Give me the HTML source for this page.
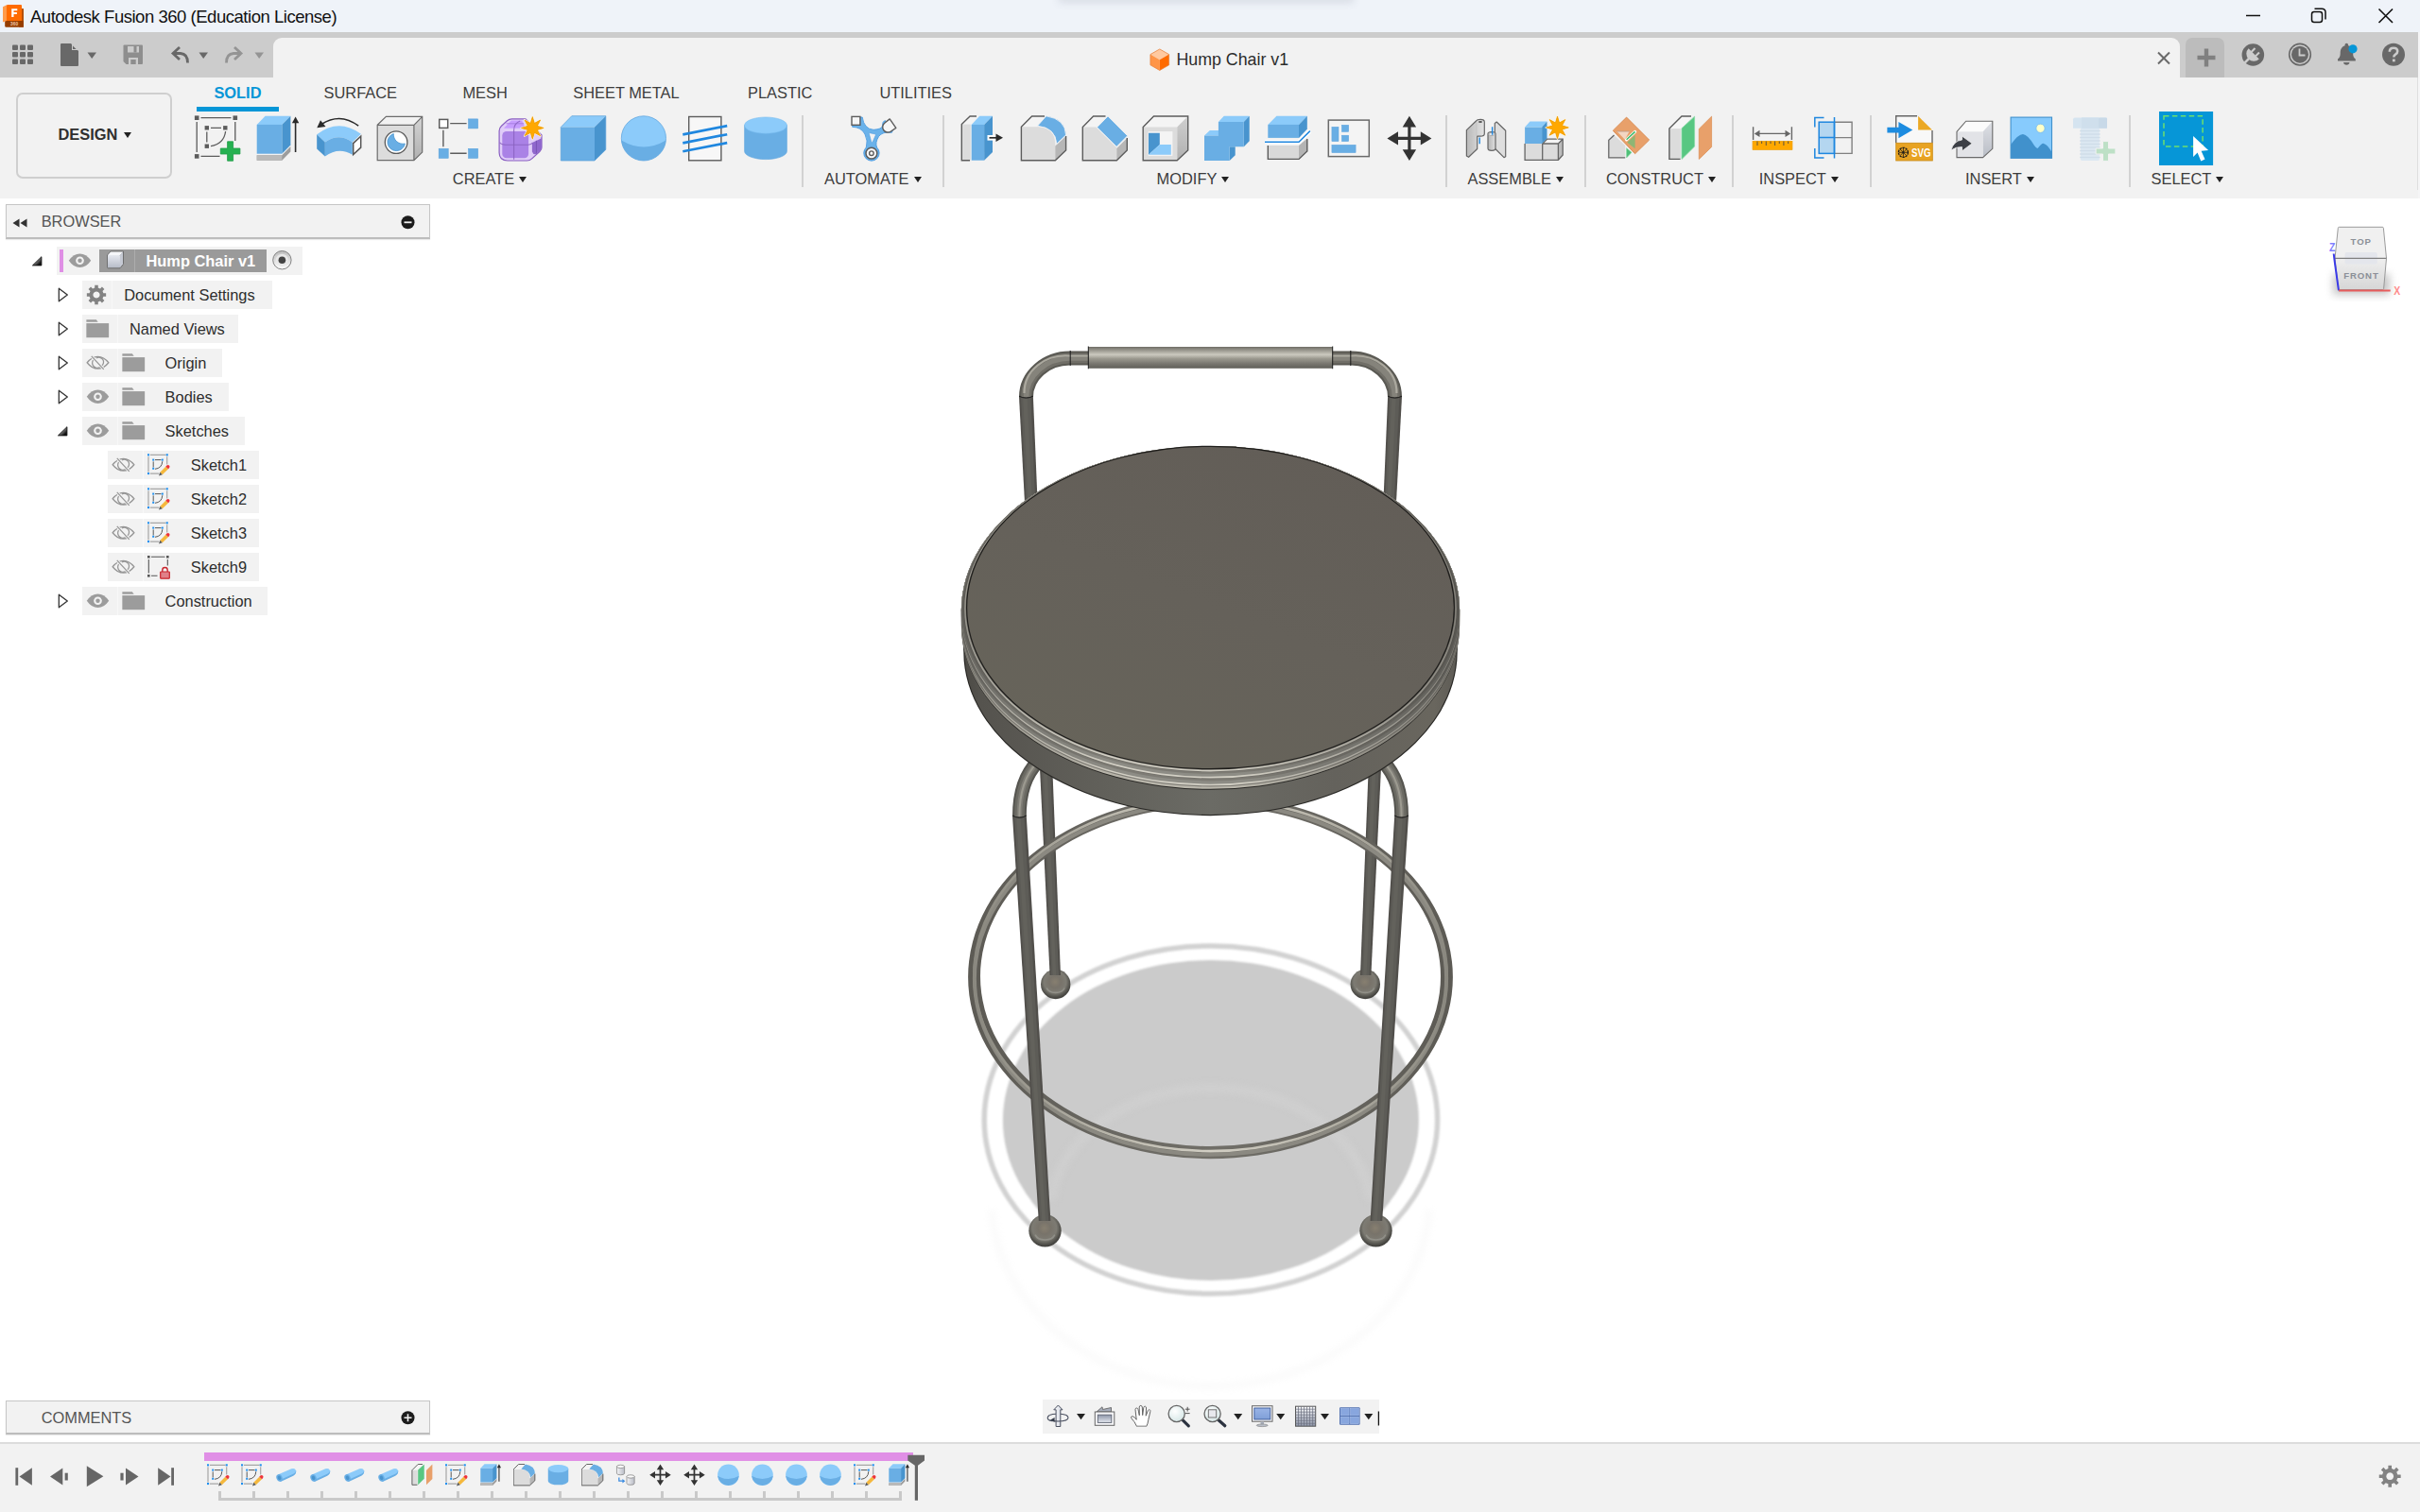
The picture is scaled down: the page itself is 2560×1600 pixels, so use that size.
<!DOCTYPE html>
<html><head><meta charset="utf-8"><title>Autodesk Fusion 360</title>
<style>
*{box-sizing:border-box;margin:0;padding:0}
html,body{width:2560px;height:1600px;overflow:hidden;background:#fff;font-family:"Liberation Sans",sans-serif;color:#333}
.abs{position:absolute}
#titlebar{position:absolute;left:0;top:0;width:2560px;height:34px;background:#eff3f9;overflow:hidden}
#titlebar .t{position:absolute;left:32px;top:6px;font-size:18.5px;letter-spacing:-0.47px;color:#111;line-height:24px;white-space:nowrap}
#qat{position:absolute;left:0;top:34px;width:2558px;height:48px;background:#cccccc}
#tab{position:absolute;left:289px;top:40px;width:2017px;height:42px;background:#f2f2f2;border-radius:9px 9px 0 0}
#tabtitle{position:absolute;left:1244.500px;top:52px;font-size:17.800px;line-height:22px;color:#2c2c2c;white-space:nowrap}
#ribbon{position:absolute;left:0;top:82px;width:2560px;height:128px;background:#f2f2f2}
#rightedge{position:absolute;left:2558px;top:34px;width:2px;height:176px;background:#f5f5f6}
#canvas{position:absolute;left:0;top:210px;width:2560px;height:1316px;background:#fff;overflow:hidden}
#timeline{position:absolute;left:0;top:1526px;width:2560px;height:74px;background:#f2f2f2;border-top:2px solid #dcdcdc}
.rt{position:absolute;top:88px;font-size:16.4px;line-height:20px;color:#3c3c3c;white-space:nowrap}
.rl{position:absolute;top:179px;font-size:16.4px;line-height:20px;color:#3c3c3c;white-space:nowrap}
.dd{display:inline-block;width:0;height:0;border-left:4.8px solid transparent;border-right:4.8px solid transparent;border-top:6.2px solid #222;margin-left:5px;vertical-align:2px}
.sep{position:absolute;top:122px;width:2px;height:76px;background:#d2d2d2}
svg{position:absolute;overflow:visible}
.tn{position:absolute;font-size:16.4px;line-height:20px;color:#2d2d2d;white-space:nowrap}
.tb{position:absolute;background:#f2f2f2;height:40px}
</style></head>
<body>
<div id="titlebar"><div class="abs" style="left:1122px;top:-12px;width:308px;height:12px;box-shadow:0 1px 9px 2px rgba(70,80,100,0.13)"></div><div class="t">Autodesk Fusion 360 (Education License)</div></div>
<div id="qat"></div>
<div id="tab"></div>
<div id="tabtitle">Hump Chair v1</div>
<div id="ribbon"></div>
<div id="rightedge"></div><div class="abs" style="left:2557px;top:82px;width:1px;height:119px;background:#dedede"></div>
<div id="canvas"></div>
<div id="timeline"></div>
<svg style="left:0px;top:0px" width="30" height="32" viewBox="0 0 30 32">
<path d="M23 9 H24.400 Q24.900 9 24.900 9.500 V28.300 Q24.900 28.800 24.400 28.800 H20 V22 L23 20 Z" fill="#b5500a"/>
<path d="M5.200 22 H23 L24.900 22 V28.300 Q24.900 28.800 24.400 28.800 H6.500 Q5.200 28.800 5.200 27.500 Z" fill="#953d00"/>
<path d="M23 22 L24.900 22 V9.500 L23 9 Z" fill="#b5500a"/>
<path d="M3 7.300 L7 5.200 V22 L3 23.500 Z" fill="#ff9a4a"/>
<path d="M7 6 Q7 5 8 5 H22 Q23 5 23 6 V22 H7 Z" fill="#ff6b00"/>
<path d="M12.200 9.300 H18.300 V11.200 H14.500 V13 H17.900 V14.900 H14.500 V18 H12.200 Z" fill="#fff"/>
<text x="15.100" y="27" font-size="4.800" font-weight="700" fill="#f0c8a8" text-anchor="middle" font-family="Liberation Sans">360</text>
</svg>
<svg style="left:2376px;top:8px" width="160" height="18" viewBox="0 0 160 18" fill="none" stroke="#111" stroke-width="1.500">
<path d="M0 8.500 H15"/>
<rect x="69.500" y="4.500" width="11" height="11" rx="2.500"/>
<path d="M72.500 1.200 H80 Q84 1.200 84 5 V12.500" />
<path d="M140.500 1.500 L155 16 M155 1.500 L140.500 16" stroke-width="1.600"/>
</svg>

<svg style="left:13px;top:47px" width="22" height="22" viewBox="0 0 22 22" fill="#686868">
<rect x="0" y="0.5" width="6" height="5.6" rx="1"/><rect x="8" y="0.5" width="6" height="5.6" rx="1"/><rect x="16" y="0.5" width="6" height="5.6" rx="1"/>
<rect x="0" y="8" width="6" height="5.6" rx="1"/><rect x="8" y="8" width="6" height="5.6" rx="1"/><rect x="16" y="8" width="6" height="5.6" rx="1"/>
<rect x="0" y="15.5" width="6" height="5.6" rx="1"/><rect x="8" y="15.5" width="6" height="5.6" rx="1"/><rect x="16" y="15.5" width="6" height="5.6" rx="1"/>
</svg>
<svg style="left:63px;top:46px" width="42" height="24" viewBox="0 0 42 24">
<path d="M1 1 Q1 0 2 0 H12 L20 8 V23 Q20 24 19 24 H2 Q1 24 1 23 Z" fill="#686868"/>
<path d="M13 0.3 V7 H19.7 Z" fill="#cccccc"/><path d="M14 2.5 V6 H17.5 Z" fill="#686868"/>
<path d="M29.5 9.5 H39 L34.2 16 Z" fill="#686868"/>
</svg>
<svg style="left:130px;top:47px" width="22" height="22" viewBox="0 0 22 22">
<path d="M1.5 0.5 H20 Q21 0.5 21 1.5 V20 Q21 21 20 21 H3.5 L0.5 18 V1.5 Q0.5 0.5 1.5 0.5 Z" fill="#8e8e8e"/>
<rect x="5" y="2" width="12" height="6.5" fill="#cccccc"/><rect x="11.5" y="2" width="3" height="6.5" fill="#8e8e8e"/>
<rect x="6" y="14" width="10" height="7" fill="#cccccc"/><rect x="8.3" y="16" width="5.4" height="5" fill="#8e8e8e"/>
</svg>
<svg style="left:180px;top:48px" width="42" height="20" viewBox="0 0 42 20" fill="none">
<path d="M3 8.5 H11 Q18.5 9 18.5 18.5" stroke="#686868" stroke-width="2.8"/>
<path d="M10 2 L3 8.5 L10 15" stroke="#686868" stroke-width="2.8" stroke-linejoin="miter"/>
<path d="M30.5 7.5 H40 L35.2 14 Z" fill="#686868"/>
</svg>
<svg style="left:238px;top:48px" width="42" height="20" viewBox="0 0 42 20" fill="none">
<path d="M17 8.5 H9 Q1.5 9 1.5 18.5" stroke="#949494" stroke-width="2.8"/>
<path d="M10 2 L17 8.5 L10 15" stroke="#949494" stroke-width="2.8"/>
<path d="M31.5 7.5 H41 L36.2 14 Z" fill="#949494"/>
</svg>
<svg style="left:2282px;top:55px" width="14" height="13" viewBox="0 0 14 13"><path d="M1 0.5 L13 12.5 M13 0.5 L1 12.5" stroke="#6a6a6a" stroke-width="2"/></svg>
<div class="abs" style="left:2312px;top:40px;width:41px;height:42px;background:#bcbcbc;border-radius:7px 7px 0 0"></div>
<svg style="left:2324px;top:51px" width="20" height="20" viewBox="0 0 20 20"><path d="M10 0.500 V19.500 M0.500 10 H19.500" stroke="#808080" stroke-width="4.400"/></svg>
<svg style="left:2371px;top:45px" width="26" height="26" viewBox="0 0 26 26">
<circle cx="12.350" cy="12.980" r="11.800" fill="#686868"/>
<g transform="translate(13.200 11.800) rotate(45)" fill="#cdcdcd">
<path d="M-7.900 0 H7.900 A7.900 7.900 0 0 1 -7.900 0 Z"/>
<rect x="-4.200" y="-5" width="2.100" height="5.500"/><rect x="2.100" y="-5" width="2.100" height="5.500"/>
<rect x="-1.250" y="7" width="2.500" height="6.500"/>
</g>
</svg>
<svg style="left:2420px;top:45px" width="26" height="26" viewBox="0 0 26 26">
<circle cx="13" cy="12.700" r="11.300" fill="none" stroke="#686868" stroke-width="1.6"/>
<circle cx="13" cy="12.700" r="9" fill="#686868"/>
<path d="M12.5 6.500 V13.500 H18.5" fill="none" stroke="#ccc" stroke-width="1.800"/>
</svg>
<svg style="left:2468px;top:44px" width="30" height="28" viewBox="0 0 30 28">
<path d="M12.500 3.500 a1.800 1.800 0 0 1 3.600 0 v0.800 c4 1.200 5 4.500 5 8 c0 3.500 1 5 2.700 6.300 v1.800 H5 v-1.800 c1.700 -1.300 2.700 -2.800 2.700 -6.300 c0 -3.500 1 -6.800 5 -8 z" fill="#686868"/>
<path d="M11 22 h6.500 a3.300 3.300 0 0 1 -6.500 0 z" fill="#686868"/>
<circle cx="21" cy="7.800" r="4.600" fill="#0696d7"/>
</svg>
<svg style="left:2519px;top:45px" width="26" height="26" viewBox="0 0 26 26">
<circle cx="13" cy="12.700" r="12" fill="#686868"/>
<path d="M8.800 9.800 Q8.800 5.800 13 5.800 Q17.200 5.800 17.200 9.300 Q17.200 11.500 15 12.700 Q13.300 13.600 13.300 15.600" fill="none" stroke="#ccc" stroke-width="2.600"/>
<rect x="11.900" y="17.500" width="2.800" height="2.800" fill="#ccc"/>
</svg>
<svg style="left:1215.500px;top:50.500px" width="22.500" height="24.400" viewBox="0 0 24 26">
<path d="M11.500 1 L22 7 L11.500 13 L1 7 Z" fill="#ffc9a0"/><path d="M1 7 L11.500 13 V25 L1 19 Z" fill="#ff9548"/><path d="M22 7 L11.500 13 V25 L22 19 Z" fill="#ff6b00"/>
<path d="M11.500 1 L22 7 V19 L11.500 25 L1 19 V7 Z" fill="none" stroke="#e8803a" stroke-width="0.800"/>
</svg>

<div class="abs" style="left:17px;top:98px;width:165px;height:91px;border:2px solid #cfcfcf;border-radius:7px"></div>
<div class="abs" style="left:61.5px;top:132.3px;font-size:16.4px;font-weight:700;line-height:20px;color:#2f2f2f;white-space:nowrap">DESIGN<span class="dd" style="margin-left:7px;vertical-align:2px"></span></div>
<div class="rt" style="left:226.4px;color:#0696d7;font-weight:700">SOLID</div>
<div class="abs" style="left:208px;top:113px;width:87px;height:4.5px;background:#0696d7"></div>
<div class="rt" style="left:342.6px">SURFACE</div>
<div class="rt" style="left:489.4px">MESH</div>
<div class="rt" style="left:606.3px">SHEET METAL</div>
<div class="rt" style="left:791px">PLASTIC</div>
<div class="rt" style="left:930.4px">UTILITIES</div>
<div class="rl" style="left:478.8px">CREATE<span class="dd"></span></div>
<div class="rl" style="left:872px">AUTOMATE<span class="dd"></span></div>
<div class="rl" style="left:1223.6px">MODIFY<span class="dd"></span></div>
<div class="rl" style="left:1552.5px">ASSEMBLE<span class="dd"></span></div>
<div class="rl" style="left:1699px">CONSTRUCT<span class="dd"></span></div>
<div class="rl" style="left:1860.8px">INSPECT<span class="dd"></span></div>
<div class="rl" style="left:2079px">INSERT<span class="dd"></span></div>
<div class="rl" style="left:2275.6px">SELECT<span class="dd"></span></div>
<div class="sep" style="left:848px"></div>
<div class="sep" style="left:997px"></div>
<div class="sep" style="left:1529px"></div>
<div class="sep" style="left:1676px"></div>
<div class="sep" style="left:1832px"></div>
<div class="sep" style="left:1978px"></div>
<div class="sep" style="left:2252px"></div>

<!-- sketch -->
<svg style="left:204.5px;top:122px" width="50" height="50" viewBox="0 0 50 50">
<g fill="#5c5c5c"><rect x="0.9" y="0.4" width="4.6" height="4.6"/><rect x="41.5" y="0.4" width="4.6" height="4.6"/><rect x="0.9" y="41.100" width="4.6" height="4.6"/>
<rect x="11.600" y="11.100" width="4.400" height="4.400"/><rect x="31.100" y="11.100" width="4.400" height="4.400"/><rect x="11.600" y="30.500" width="4.400" height="4.400"/></g>
<g fill="none" stroke="#5c5c5c" stroke-width="1.300"><path d="M7.500 2.700 H39.500 M3.200 7 V39 M43.800 7 V27 M7.500 43.400 H27.500"/>
<path d="M18 13.300 H29 M13.800 17.500 V28.500 M33.600 17 Q32 30 18 32.700"/></g>
<path d="M35.600 27.800 h6 v7.200 h7.300 v6 h-7.300 v7.200 h-6 v-7.200 h-7.300 v-6 h7.300 z" fill="#25b151" stroke="#1f9c46" stroke-width="0.800"/>
</svg>
<!-- extrude -->
<svg style="left:269px;top:122px" width="50" height="50" viewBox="0 0 50 50">
<path d="M2.700 42.200 H29.300 L38.400 33 V38.500 L29.300 47.700 H2.700 Z" fill="#9c9c9c"/><rect x="2.700" y="42.200" width="26.600" height="5.500" fill="#bababa"/>
<path d="M2.700 9.900 L11.600 0.700 H38.400 L29.300 9.900 Z" fill="#8ccbfa"/>
<path d="M29.300 9.900 L38.400 0.700 V31.600 L29.300 40.700 Z" fill="#4894ce"/>
<rect x="2.700" y="9.900" width="26.600" height="30.800" fill="#69aee4"/>
<path d="M43.600 5 V39" stroke="#2a2a2a" stroke-width="1.600"/><path d="M43.600 1.500 L47.300 8.300 H39.900 Z" fill="#2a2a2a"/>
</svg>
<!-- revolve -->
<svg style="left:333.600px;top:122px" width="50" height="50" viewBox="0 0 50 50">
<path d="M1.200 20.300 Q24.300 2.500 47.900 19.800 L38.800 28.400 Q24.300 18 9.800 28.400 Z" fill="#8ccbfa"/>
<path d="M9.800 28.400 Q24.300 18 38.800 28.400 V41.800 Q24.300 33 9.800 43.600 Z" fill="#69aee4"/>
<path d="M1.200 20.300 L9.800 28.400 V43.600 L1.200 35.400 Z" fill="#4894ce"/>
<path d="M39.700 29.600 L47.700 22.200 V34.100 L39.700 41.600 Z" fill="#fff" stroke="#555" stroke-width="1.500"/>
<path d="M45.200 11.200 Q26 -3.500 6 9.500" fill="none" stroke="#2a2a2a" stroke-width="1.500"/><path d="M1.300 13.300 L5 5.200 L10.500 12 Z" fill="#2a2a2a"/>
</svg>
<!-- hole -->
<svg style="left:397px;top:122px" width="52" height="50" viewBox="0 0 52 50">
<defs><linearGradient id="hgr" x1="0" y1="0" x2="0" y2="1"><stop offset="0" stop-color="#d4d4d4"/><stop offset="1" stop-color="#b0b0b0"/></linearGradient></defs>
<path d="M2.200 10.300 L11.400 1.300 H49.700 L40.900 10.300 Z" fill="#f2f2f2"/>
<path d="M40.900 10.300 L49.700 1.300 V39.100 L40.900 47.700 Z" fill="url(#hgr)"/>
<rect x="2.200" y="10.300" width="38.700" height="37.400" fill="#dcdcdc"/>
<path d="M2.200 10.300 L11.400 1.300 H49.700 V39.100 L40.900 47.700 H2.200 Z M2.200 10.300 H40.900 V47.700 M40.900 10.300 L49.700 1.300" fill="none" stroke="#6c6c6c" stroke-width="1.200"/>
<circle cx="22.100" cy="28.600" r="11.800" fill="#fff" stroke="#5a5a5a" stroke-width="1.300"/>
<path d="M19.300 19.500 A9.300 9.300 0 1 0 31.400 30 A10 10 0 0 1 19.300 19.500 Z" fill="#69aee4" stroke="#4894ce" stroke-width="0.800"/>
</svg>

<!-- pattern -->
<svg style="left:460.600px;top:122px" width="50" height="50" viewBox="0 0 50 50">
<rect x="3.700" y="4.400" width="9" height="9" fill="#fff" stroke="#5c5c5c" stroke-width="1.500"/>
<g fill="#69aee4" stroke="#5aa2dc" stroke-width="0.600"><rect x="34.600" y="3.900" width="10" height="10"/><rect x="3.200" y="35.300" width="10" height="10"/><rect x="34.600" y="35.300" width="10" height="10"/></g>
<path d="M15.200 8.600 H32.600 M7.900 15.800 V33.200 M15.200 40.300 H32.600" stroke="#5c5c5c" stroke-width="1.400" fill="none"/>
</svg>
<!-- form -->
<svg style="left:526px;top:122px" width="52" height="50" viewBox="0 0 52 50">
<path d="M2.100 16.500 Q2.100 13.500 4.500 11.300 L10.500 5.800 Q12.700 3.900 15.500 3.900 H30 L47 21 V34.100 Q47 36.500 45 38.300 L37 45.600 Q34.500 48 31.300 48 H11 Q2.100 48 2.100 39.600 Z" fill="#e0cdf8" stroke="#8a5fc2" stroke-width="1.200" stroke-linejoin="round"/>
<path d="M14.800 5.500 H26 L30 13.800 H7 Z" fill="#c79dff"/>
<path d="M9.500 8.800 H28" stroke="#a57de0" stroke-width="0.900"/>
<rect x="5.300" y="17" width="27.800" height="28.200" rx="4.500" fill="#aa82e6"/>
<path d="M36.900 28.900 L47 24.200 V34 Q47 36 45.500 37.300 L41.500 40.800 Q38.500 42.500 36.900 38.500 Z" fill="#9068cd"/>
<path d="M41.400 26.800 V40.500" stroke="#7a53b5" stroke-width="1"/>
<path d="M24.200 5.900 Q17.600 8.500 17.600 16 V46.800" fill="none" stroke="#8a62c0" stroke-width="1.100" opacity="0.850"/>
<path d="M2.600 28.700 Q4 31.300 12 31.300 H30 Q36 31.300 37.200 29" fill="none" stroke="#8a62c0" stroke-width="1.100" opacity="0.850"/>
<path d="M37.3 1.2 L39.4 8.3 L45.9 4.8 L42.4 11.3 L49.5 13.4 L42.4 15.5 L45.9 22.0 L39.4 18.5 L37.3 25.6 L35.2 18.5 L28.7 22.0 L32.2 15.5 L25.1 13.4 L32.2 11.3 L28.7 4.8 L35.2 8.3 Z" fill="#ffa800" stroke="#fdf3dc" stroke-width="1.600" stroke-linejoin="round" paint-order="stroke"/>
<path d="M37.3 1.6 L39.4 8.4 L45.6 5.1 L42.3 11.3 L49.1 13.4 L42.3 15.5 L45.6 21.7 L39.4 18.4 L37.3 25.2 L35.2 18.4 L29.0 21.7 L32.3 15.5 L25.5 13.4 L32.3 11.3 L29.0 5.1 L35.2 8.4 Z" fill="#ffa800" stroke="#e59700" stroke-width="0.500"/>
</svg>
<!-- box -->
<svg style="left:592.500px;top:122px" width="50" height="50" viewBox="0 0 50 50">
<path d="M0.300 12.500 L11.800 0.700 H47.800 L36 12.500 Z" fill="#8ccbfa"/>
<path d="M36 12.500 L47.800 0.700 V36.400 L36 48 Z" fill="#4894ce"/>
<rect x="0.300" y="12.500" width="35.700" height="35.500" fill="#69aee4"/>
<path d="M0.300 12.500 L11.800 0.700 H47.800 V36.400 L36 48 H0.300 Z" fill="none" stroke="#5aa0da" stroke-width="0.700"/>
</svg>
<!-- sphere -->
<svg style="left:657px;top:122px" width="50" height="50" viewBox="0 0 50 50">
<circle cx="23.900" cy="24.400" r="23.600" fill="#8ccbfa"/>
<path d="M0.400 26.500 Q23.900 40.500 47.400 26.500 A23.600 23.600 0 0 1 0.400 26.500 Z" fill="#69aee4"/>
<circle cx="23.900" cy="24.400" r="23.600" fill="none" stroke="#64a8e0" stroke-width="0.800"/>
</svg>
<!-- coil -->
<svg style="left:721.700px;top:122px" width="50" height="50" viewBox="0 0 50 50">
<rect x="6.700" y="1.500" width="34.200" height="46.300" fill="#f7f7f7" stroke="#5c5c5c" stroke-width="1.400"/>
<path d="M0.300 20.400 L47.200 11.100 M0.300 29.400 L47.200 20.200 M0.300 38.300 L47.200 29.100" stroke="#1f87df" stroke-width="2.700" fill="none"/>
</svg>
<!-- cylinder -->
<svg style="left:786px;top:122px" width="50" height="50" viewBox="0 0 50 50">
<path d="M1.600 10.600 V38 A22.400 8.600 0 0 0 46.400 38 V10.600 Z" fill="#69aee4" stroke="#5ea4de" stroke-width="0.600"/>
<ellipse cx="24" cy="10.600" rx="22.400" ry="8.600" fill="#8ccbfa" stroke="#7abdf0" stroke-width="0.600"/>
</svg>
<!-- automate -->
<svg style="left:899.800px;top:122px" width="50" height="50" viewBox="0 0 50 50">
<path d="M1.700 12.300 Q11 12.500 15 20 Q18.500 27 16.300 34 A8.200 8.200 0 1 0 27.600 34 Q25.500 29 29.500 22.500 Q33.500 17 43.400 18.300 L45 14 L36 5.500 Q33.500 6.500 33.500 11 Q33 14.800 24 15.300 Q14 14.500 12.200 2 L10 2 V10.500 H1.700 Z" fill="#6ab2ea" stroke="#4c9be0" stroke-width="0.900" stroke-linejoin="round"/>
<path d="M19.300 19.300 Q18.500 18.300 20 18.700 L25.500 19.800 Q26.800 20 26.200 21.300 L23.200 28 Q22.400 29.500 21.700 28 Z" fill="#f2f2f2" stroke="#4c9be0" stroke-width="0.600"/>
<rect x="1" y="1.400" width="8.900" height="8.900" fill="#f6f6f6" stroke="#5c5c5c" stroke-width="1.400"/>
<path d="M41.200 3.900 L47.800 13.400 L42.500 17 A5.300 5.300 0 0 1 36 8 Z" fill="#f6f6f6" stroke="#5c5c5c" stroke-width="1.400" stroke-linejoin="round"/>
<circle cx="21.900" cy="40.200" r="5.900" fill="#fafafa" stroke="#5c5c5c" stroke-width="1.500"/><circle cx="21.900" cy="40.200" r="2.300" fill="#fafafa" stroke="#5c5c5c" stroke-width="1.400"/>
</svg>

<!-- presspull -->
<svg style="left:1015px;top:122px" width="50" height="50" viewBox="0 0 50 50">
<path d="M2.300 47.700 V9.600 L11.100 1 H18 L12 9.600 V47.700 Z" fill="#f4f4f4"/><rect x="2.300" y="9.600" width="9.500" height="38.100" fill="#dcdcdc"/>
<path d="M11 47.700 H2.300 V9.600 L11.100 1 H18" fill="none" stroke="#5c5c5c" stroke-width="1.400"/>
<path d="M12.700 9.900 L21.300 0.700 H35 L26.100 9.900 Z" fill="#8ccbfa"/><path d="M26.100 9.900 L35 0.700 V39.100 L26.100 47.700 Z" fill="#4894ce"/><rect x="12.700" y="9.900" width="13.400" height="37.800" fill="#69aee4"/>
<rect x="29.500" y="21" width="9" height="5.600" fill="#fff"/>
<path d="M31.500 23.800 H40" stroke="#2a2a2a" stroke-width="1.700"/><path d="M38.500 19.500 L46 23.800 L38.500 28.100 Z" fill="#2a2a2a"/>
</svg>
<!-- fillet -->
<svg style="left:1080px;top:122px" width="50" height="50" viewBox="0 0 50 50">
<path d="M0.400 12.300 L11.600 1 H26.700 L19.200 12.300 Z" fill="#f4f4f4"/>
<path d="M0.400 12.300 H19.200 Q36.300 13 36.300 31.600 V47.700 H0.400 Z" fill="#dcdcdc"/>
<path d="M36.300 32.500 L47.600 22 V37 L36.300 47.700 Z" fill="#b6b6b6"/>
<path d="M17.500 11.300 L26.700 0.800 Q47 4 47.600 20.900 L37.800 30.300 Q36.500 13 17.500 11.300 Z" fill="#69aee4" stroke="#f4f4f4" stroke-width="0.800"/>
<path d="M25 1 H11.600 L0.400 12.300 V47.700 H36.300 L47.600 37 V22" fill="none" stroke="#5c5c5c" stroke-width="1.400"/>
</svg>
<!-- chamfer -->
<svg style="left:1145px;top:122px" width="50" height="50" viewBox="0 0 50 50">
<path d="M0.300 12.500 L11.600 1 H25.500 L14.300 12.500 Z" fill="#f4f4f4"/>
<path d="M0.300 12.500 H14.300 L36.300 34.300 V47.700 H0.300 Z" fill="#dcdcdc"/>
<path d="M36.300 35 L47.300 24 V37 L36.300 47.700 Z" fill="#b6b6b6"/>
<path d="M15.500 12.700 L27 0.900 L47.700 21.700 L36.200 33.300 Z" fill="#69aee4" stroke="#f4f4f4" stroke-width="0.800"/>
<path d="M24.500 1 H11.600 L0.300 12.500 V47.700 H36.300 L47.300 37 V24" fill="none" stroke="#5c5c5c" stroke-width="1.400"/>
</svg>
<!-- shell -->
<svg style="left:1209px;top:122px" width="50" height="50" viewBox="0 0 50 50">
<defs><linearGradient id="shg" x1="0" y1="0" x2="0" y2="1"><stop offset="0" stop-color="#cfcfcf"/><stop offset="1" stop-color="#b0b0b0"/></linearGradient></defs>
<path d="M0.200 12.500 L11.500 1 H47.700 L36.200 12.500 Z" fill="#f4f4f4"/>
<path d="M36.200 12.500 L47.700 1 V37 L36.200 47.700 Z" fill="url(#shg)"/>
<rect x="0.200" y="12.500" width="36" height="35.200" fill="#dcdcdc"/>
<rect x="5.600" y="17.100" width="25.800" height="25.800" fill="#f4f4f4"/>
<path d="M6 18.700 H17.800 V31 L6 41.800 Z" fill="#4894ce"/><path d="M17.800 31 H29.800 V41.800 H6 Z" fill="#8ccbfa"/>
<path d="M0.200 12.500 L11.500 1 H47.700 V37 L36.200 47.700 H0.200 Z" fill="none" stroke="#5c5c5c" stroke-width="1.400"/>
</svg>
<!-- combine -->
<svg style="left:1273.700px;top:122px" width="50" height="50" viewBox="0 0 50 50">
<path d="M0 21.400 L5.800 16 H15 V21.400 Z M14.900 6.900 L20.800 0.700 H47.700 L41.800 6.900 Z" fill="#8ccbfa"/>
<path d="M41.800 6.900 L47.700 0.700 V27.300 L41.800 33.200 Z M26.700 33.200 H32.700 V42.300 L26.700 48 Z" fill="#4894ce"/>
<path d="M0 21.400 H14.900 V6.900 H41.800 V33.200 H26.700 V48 H0 Z" fill="#69aee4"/>
</svg>
<!-- split -->
<svg style="left:1338px;top:122px" width="50" height="50" viewBox="0 0 50 50">
<path d="M3.300 32.100 H36 V46.400 H3.300 Z" fill="#d9d9d9"/><path d="M36 32.100 L44.800 24.500 V38 L36 46.400 Z" fill="#b4b4b4"/>
<path d="M3.300 32.100 V46.400 H36 L44.800 38 V25" fill="none" stroke="#5c5c5c" stroke-width="1.400"/>
<path d="M0 28.200 H36 L47.800 16.600" fill="none" stroke="#fff" stroke-width="4.500"/>
<path d="M3.300 9.900 L12.400 0.700 H44.800 L36 9.900 Z" fill="#8ccbfa"/><path d="M36 9.900 L44.800 0.700 V14.400 L36 23.900 Z" fill="#4894ce"/><rect x="3.300" y="9.900" width="32.700" height="14" fill="#69aee4"/>
<path d="M0 28.200 H36 L47.800 16.600" fill="none" stroke="#1f87df" stroke-width="1.500"/>
</svg>
<!-- align -->
<svg style="left:1402.700px;top:122px" width="50" height="50" viewBox="0 0 50 50">
<rect x="2.300" y="5.100" width="43" height="38.500" fill="#f4f4f4" stroke="#6a6a6a" stroke-width="1.500"/>
<g fill="#69aee4" stroke="#5ea4de" stroke-width="0.500"><rect x="5.900" y="12.300" width="7.100" height="15.300"/><rect x="16.400" y="10.300" width="7.300" height="7.100"/><rect x="16.400" y="21.200" width="7.300" height="6.400"/><rect x="5.900" y="31.300" width="25.200" height="8.300"/></g>
</svg>
<!-- move -->
<svg style="left:1467px;top:122px" width="50" height="50" viewBox="0 0 50 50">
<path d="M23.900 8 V41 M7 24.400 H41" stroke="#333" stroke-width="3.200"/>
<path d="M23.900 0.800 L31.100 12.500 H16.700 Z M23.900 48 L31.100 36.300 H16.700 Z M0.400 24.400 L12 17.200 V31.600 Z M47.400 24.400 L35.800 17.200 V31.600 Z" fill="#333"/>
</svg>

<!-- joint -->
<svg style="left:1548px;top:122px" width="50" height="50" viewBox="0 0 50 50">
<defs><linearGradient id="jg1" x1="0" y1="0" x2="1" y2="0"><stop offset="0" stop-color="#b8b8b8"/><stop offset="1" stop-color="#e4e4e4"/></linearGradient>
<linearGradient id="jg2" x1="0" y1="0" x2="1" y2="0"><stop offset="0" stop-color="#b4b4b4"/><stop offset="1" stop-color="#e0e0e0"/></linearGradient></defs>
<path d="M3.400 15.600 L13.500 6 Q14.500 4.300 18 4.300 Q22.300 4.300 22.300 7 V19.500 Q22.300 22.200 18 22.200 H14.700 V35.500 L5.600 44.300 L3.400 43 Z" fill="url(#jg1)" stroke="#666" stroke-width="1.200" stroke-linejoin="round"/>
<ellipse cx="18" cy="7" rx="2" ry="0.900" fill="#555"/>
<path d="M13.800 7 V21.500" stroke="#c0c0c0" stroke-width="0.800"/>
<path d="M33.300 8.400 L35.200 7 L44.700 16.200 V43.700 L43 44.600 L33.300 35 Z" fill="#dedede" stroke="#666" stroke-width="1.200" stroke-linejoin="round"/>
<path d="M26 19.500 Q26 17.500 30 17.500 Q34 17.500 34 19.500 V35 Q34 37.300 30 37.300 Q26 37.300 26 35 Z" fill="url(#jg2)" stroke="#666" stroke-width="1.200"/>
<ellipse cx="30" cy="20" rx="3.300" ry="1.500" fill="#f0f0f0" stroke="#888" stroke-width="0.600"/>
<path d="M17.200 23.600 V30.200 M30.600 12.200 V20.800" stroke="#1f87df" stroke-width="1.400"/>
</svg>
<!-- new component -->
<svg style="left:1612px;top:122px" width="50" height="50" viewBox="0 0 50 50">
<rect x="1.100" y="30" width="18.300" height="17.300" fill="#dcdcdc"/>
<path d="M19.700 30 L24.500 25.200 H41.200 L36.400 30 Z" fill="#f4f4f4"/><path d="M36.400 30 L41.200 25.200 V42 L36.400 47.300 Z" fill="#bcbcbc"/><rect x="19.700" y="30" width="16.700" height="17.300" fill="#dcdcdc"/>
<path d="M1.100 30 V47.300 H36.400 L41.200 42 V25.200 H24.500 L19.700 30 V47.300 M19.700 30 H36.400 V47.300 M36.400 30 L41.200 25.200" fill="none" stroke="#666" stroke-width="1.300"/>
<path d="M1.100 12.600 L6.500 6.600 H24.500 L19.100 12.600 Z" fill="#8ccbfa"/><path d="M19.100 12.600 L24.500 6.600 V24.600 L19.100 30 Z" fill="#4894ce"/><rect x="1.100" y="12.600" width="18" height="17.400" fill="#69aee4"/>
<path d="M35.5 0.7 L37.6 7.8 L44.1 4.3 L40.6 10.8 L47.7 12.9 L40.6 15.0 L44.1 21.5 L37.6 18.0 L35.5 25.1 L33.4 18.0 L26.9 21.5 L30.4 15.0 L23.3 12.9 L30.4 10.8 L26.9 4.3 L33.4 7.8 Z" fill="#ffa800" stroke="#fdf3dc" stroke-width="1.600" stroke-linejoin="round" paint-order="stroke"/><path d="M35.5 1.1 L37.6 7.9 L43.8 4.6 L40.5 10.8 L47.3 12.9 L40.5 15.0 L43.8 21.2 L37.6 17.9 L35.5 24.7 L33.4 17.9 L27.2 21.2 L30.5 15.0 L23.7 12.9 L30.5 10.8 L27.2 4.6 L33.4 7.9 Z" fill="#ffa800" stroke="#e59700" stroke-width="0.500"/>
</svg>
<!-- offset plane -->
<svg style="left:1698.700px;top:122px" width="50" height="50" viewBox="0 0 50 50">
<path d="M2.800 44.900 V26.400 L8.500 21 L20.200 32 V44.900 Z" fill="#dcdcdc"/>
<path d="M20.200 44.900 H2.800 V26.400 L8.500 21" fill="none" stroke="#666" stroke-width="1.300"/>
<path d="M21.600 34.700 L27 39.300 L21.600 44.900 Z" fill="#4fbf78" stroke="#7fd79c" stroke-width="0.600"/>
<path d="M21.600 2.100 L45.600 26.100 L30.600 40.700 L7.300 16.200 Z" fill="#e8a06a" stroke="#dc9058" stroke-width="1"/>
<path d="M11.500 17.100 H24.600 L19.900 25.800 Z" fill="#f3d6c2"/><path d="M11.500 17.100 H24.600" stroke="#b9a090" stroke-width="0.800"/>
<path d="M22.300 28.800 L30.600 21 V35.300 Z" fill="#8fb574"/>
<path d="M21.600 25.800 L30.600 17.400" stroke="#fff" stroke-width="3.200" stroke-linecap="round"/><path d="M21.600 25.800 L30.600 17.400" stroke="#3fb96b" stroke-width="1.500"/>
</svg>
<!-- midplane -->
<svg style="left:1764px;top:122px" width="50" height="50" viewBox="0 0 50 50">
<path d="M1.900 14.100 L15 1 H25.900 L13.900 14.100 Z" fill="#f6f6f6"/><rect x="1.900" y="14.100" width="12" height="32.300" fill="#dcdcdc"/>
<path d="M13.500 46.400 H1.900 V14.100 L15 1 H25" fill="none" stroke="#5c5c5c" stroke-width="1.400"/>
<path d="M15 13.800 L28.600 1.200 V33 L15 46.400 Z" fill="#58c782" stroke="#86d9a4" stroke-width="0.800"/>
<path d="M33.300 14.400 L46.600 1.200 V33.500 L33.300 46.400 Z" fill="#e8a06a" stroke="#dc9058" stroke-width="0.800"/>
</svg>
<!-- measure -->
<svg style="left:1851px;top:122px" width="50" height="50" viewBox="0 0 50 50">
<rect x="3" y="27.300" width="42" height="9.200" fill="#ffa800" stroke="#e99a00" stroke-width="0.600"/>
<path d="M8 27.500 V32 M17.300 27.500 V32 M26.600 27.500 V32 M35.900 27.500 V32 M12.600 27.500 V30 M22 27.500 V30 M31.300 27.500 V30 M40.600 27.500 V30" stroke="#6a5a3a" stroke-width="1.100"/>
<path d="M3.600 12.300 V26.100 M44.400 12.300 V26.100 M8 19.400 H40" stroke="#666" stroke-width="1.400" fill="none"/>
<path d="M4.800 19.400 L10.500 15.800 V23 Z M43.200 19.400 L37.500 15.800 V23 Z" fill="#666"/>
</svg>
<!-- interference -->
<svg style="left:1914.500px;top:122px" width="50" height="50" viewBox="0 0 50 50">
<path d="M25.500 7.200 H44.100 V40.400 H25.500 M25.500 23.600 H44.100" fill="none" stroke="#808080" stroke-width="1.400"/>
<rect x="9.200" y="7.200" width="16.300" height="33.200" fill="#b4d6f0" stroke="#1f87df" stroke-width="1.500"/>
<path d="M9.200 23.600 H25.500 M25.500 2 V45.500 M14.500 2.600 H4.800 V12.600 M14.500 45 H4.800 V35.100" fill="none" stroke="#1f87df" stroke-width="1.500"/>
</svg>
<!-- insert svg -->
<svg style="left:1996px;top:122px" width="50" height="50" viewBox="0 0 50 50">
<path d="M9.700 0.800 H33.100 L48 15.600 V29.300 H9.700 Z" fill="#f8f8f8"/>
<path d="M9.700 29.300 V0.800 H32 M48 16 V29.300" fill="none" stroke="#666" stroke-width="1.400"/>
<path d="M33.100 0.800 L48 15.600 H33.100 Z" fill="#eba823"/>
<rect x="9.700" y="29.300" width="38.600" height="18.700" fill="#e8a323" stroke="#c98b15" stroke-width="0.800"/>
<circle cx="17.400" cy="39.300" r="5" fill="none" stroke="#1a1a1a" stroke-width="1.300" stroke-dasharray="2.400 0.740"/><circle cx="17.400" cy="39.300" r="1" fill="#1a1a1a"/>
<path d="M17.400 34.800 V43.800 M12.900 39.300 H21.900 M14.200 36.100 L20.600 42.500 M20.600 36.100 L14.200 42.500" stroke="#1a1a1a" stroke-width="0.800"/>
<text x="36.300" y="43.900" font-size="12.200" font-weight="700" fill="#fff" text-anchor="middle" font-family="Liberation Sans" textLength="20.500" lengthAdjust="spacingAndGlyphs">SVG</text>
<path d="M0.400 12.800 H12.400 V6.900 L27.300 15.600 L12.400 24.300 V18.400 H0.400 Z" fill="#1d8ce0"/>
</svg>
<!-- derive -->
<svg style="left:2062px;top:122px" width="50" height="50" viewBox="0 0 50 50">
<defs><linearGradient id="dg1" x1="0" y1="0" x2="0" y2="1"><stop offset="0" stop-color="#dfe1e6"/><stop offset="1" stop-color="#b9bdc6"/></linearGradient></defs>
<path d="M8 17.400 L17.700 6.200 H45.800 L35.600 17.400 Z" fill="#fbfbfb"/><path d="M35.600 17.400 L45.800 6.200 V35.300 L35.600 44.600 Z" fill="url(#dg1)"/><rect x="8" y="17.400" width="27.600" height="27.200" fill="#e2e3e7"/>
<path d="M8 17.400 L17.700 6.200 H45.800 V35.300 L35.600 44.600 H8 Z" fill="none" stroke="#6a6a6a" stroke-width="1.100"/>
<path d="M2 37 Q4.500 27 13.500 26 V22 L24.200 29.800 L13.500 37.800 V33.600 Q7 33.400 2 37 Z" fill="#3d4046" stroke="#f2f2f2" stroke-width="0.800"/>
</svg>
<!-- canvas -->
<svg style="left:2125px;top:122px" width="50" height="50" viewBox="0 0 50 50">
<rect x="2.100" y="2.100" width="43.400" height="43.200" fill="#87cbfd"/>
<path d="M2.100 31.100 Q10 20 15 20.100 Q20 20.500 27 32 Q29.900 36 31 34.500 Q35 29 37.100 29.900 Q41 31 45.500 39 V45.300 H2.100 Z" fill="#4191cc"/>
<circle cx="33.500" cy="13.800" r="4.600" fill="#ffffc8" stroke="#79b9e8" stroke-width="0.800"/>
<rect x="2.100" y="2.100" width="43.400" height="43.200" fill="none" stroke="#4191cc" stroke-width="1.100"/>
</svg>
<!-- mcmaster -->
<svg style="left:2191px;top:122px" width="50" height="50" viewBox="0 0 50 50">
<rect x="10" y="13" width="19.800" height="35" rx="1.500" fill="#dce8f2"/>
<path d="M9.200 16.500 H30.600 M9.200 20 H30.600 M9.200 23.500 H30.600 M9.200 27 H30.600 M9.200 30.500 H30.600 M9.200 34 H30.600 M9.200 37.500 H30.600 M9.200 41 H30.600 M9.200 44.500 H30.600" stroke="#cfdde9" stroke-width="1.300"/>
<path d="M2 4.400 Q2 2.400 4 2.400 H36 Q38 2.400 38 4.400 V13.800 H2 Z" fill="#d5e4f0"/><rect x="11" y="2.400" width="18" height="11.400" fill="#cfdfec"/><rect x="29" y="2.400" width="9" height="11.400" rx="1" fill="#c8d9e8"/>
<path d="M33.500 27.600 h6 v7.400 h7.400 v6 h-7.400 v7.400 h-6 v-7.400 h-7.400 v-6 h7.400 z" fill="#bde0c6" stroke="#f2f2f2" stroke-width="1"/>
</svg>
<!-- select -->
<svg style="left:2284.400px;top:118px" width="58" height="58" viewBox="0 0 58 58">
<rect x="0" y="0" width="57.100" height="57" fill="#0696d7"/>
<rect x="5" y="4.800" width="41.100" height="32.100" fill="none" stroke="#6de06d" stroke-width="1.500" stroke-dasharray="5.500 3.400"/>
<path d="M36.100 25.900 V48 L40.600 43.600 L44.300 52.500 L48.500 50.400 L44.600 41.700 L52.100 41.100 Z" fill="#fff"/>
</svg>


<svg width="0" height="0" style="left:0;top:0"><defs>
<symbol id="eye" viewBox="0 0 26 16" overflow="visible"><path d="M0.800 8 Q6 0.400 13 0.400 Q20 0.400 25.200 8 Q20 15.600 13 15.600 Q6 15.600 0.800 8 Z" fill="#9c9c9c"/><circle cx="13" cy="8" r="4.500" fill="#f2f2f2"/><circle cx="13" cy="8" r="2.300" fill="#9c9c9c"/></symbol>
<symbol id="eyeoff" viewBox="0 0 26 16" overflow="visible"><path d="M1.200 8 Q6.500 1.300 13 1.300 Q19.500 1.300 24.800 8 Q19.500 14.700 13 14.700 Q6.500 14.700 1.200 8 Z" fill="none" stroke="#959595" stroke-width="1.300"/><path d="M9.500 3.500 A5 5 0 0 0 15.500 13 M17 11.500 A5 5 0 0 0 11.500 3" fill="none" stroke="#959595" stroke-width="1.300"/><path d="M5.500 0.500 L20 15.800" stroke="#f2f2f2" stroke-width="3.200"/><path d="M6 0.800 L19.500 15.400" stroke="#959595" stroke-width="1.300"/></symbol>
<symbol id="folder" viewBox="0 0 25 20" overflow="visible"><path d="M0.300 0.300 H11 L13 2.800 H0.300 Z" fill="#9c9c9c"/><path d="M0.300 4.200 H24.700 V19.700 H0.300 Z" fill="#9c9c9c"/></symbol>
<symbol id="exp" viewBox="0 0 12 16" overflow="visible"><path d="M1.300 1.200 L10.300 8 L1.300 14.800 Z" fill="#fff" stroke="#333" stroke-width="1.300" stroke-linejoin="round"/></symbol>
<symbol id="expd" viewBox="0 0 12 12" overflow="visible"><linearGradient id="exg" x1="0" y1="0" x2="1" y2="1"><stop offset="0.300" stop-color="#bbb"/><stop offset="0.800" stop-color="#111"/></linearGradient><path d="M0.500 10.800 H10.800 V0.800 Z" fill="url(#exg)" stroke="#111" stroke-width="1" stroke-linejoin="round"/></symbol>
<symbol id="skt" viewBox="0 0 24 24" overflow="visible">
<path d="M3 1.400 H19.500 M1 3.300 V19.500 M20.700 3.300 V11.500 M3 21.100 H12.200" fill="none" stroke="#a6a6a6" stroke-width="1.200"/>
<path d="M8 6.600 H14.500 M6.200 8.400 V14.500 M15.800 8.200 Q15.300 15.500 8 16.300" fill="none" stroke="#585858" stroke-width="1"/>
<g fill="#1f8fef"><rect x="0" y="0.300" width="2.100" height="2.100"/><rect x="19.700" y="0.300" width="2.100" height="2.100"/><rect x="0" y="20" width="2.100" height="2.100"/><rect x="5.200" y="5.600" width="2" height="2"/><rect x="14.800" y="5.600" width="2" height="2"/><rect x="5.200" y="14.800" width="2" height="2"/></g>
<path d="M13.300 19.800 L19.300 13.700 L22 16.300 L15.800 22.300 Z" fill="#f5b83d"/><path d="M19.300 13.700 L20.400 12.600 Q21.800 11.400 23 12.600 Q24.200 13.900 23 15.200 L22 16.300 Z" fill="#ee3338"/><path d="M12 23.600 L13.300 19.800 L15.800 22.300 Z" fill="#5a5a5a"/>
</symbol>
</defs></svg>
<div class="abs" style="left:6px;top:216px;width:449px;height:37px;background:#f2f2f2;border:1px solid #c6c6c6;border-bottom:2px solid #bdbdbd;box-shadow:0 1px 1px rgba(0,0,0,0.08)"></div>
<svg style="left:13px;top:231px" width="17" height="10" viewBox="0 0 17 10"><path d="M0.500 5 L7.500 0.500 V9.500 Z M8.500 5 L15.500 0.500 V9.500 Z" fill="#333"/></svg>
<div class="tn" style="left:43.700px;top:223.800px;color:#555">BROWSER</div>
<svg style="left:423.500px;top:227.500px" width="15" height="15" viewBox="0 0 15 15"><circle cx="7.500" cy="7.300" r="7" fill="#1c1c1c"/><rect x="3.500" y="6.400" width="8" height="1.800" fill="#f2f2f2"/></svg>
<div class="tb" style="left:60px;top:261px;width:259.500px;height:30px"></div>
<svg style="left:33.500px;top:270.500px" width="11" height="11"><use href="#expd" width="11" height="11"/></svg>
<div class="abs" style="left:63.200px;top:264.200px;width:3.900px;height:23.500px;background:#df8fe5"></div>
<svg style="left:71.500px;top:268px" width="25" height="15.500"><use href="#eye" width="25" height="15.500"/></svg>
<div class="abs" style="left:105.200px;top:264.200px;width:176.800px;height:23.500px;background:#9a9a9a"></div>
<div class="abs" style="left:142px;top:264.200px;width:1px;height:23.500px;background:#adadad"></div>
<svg style="left:111.500px;top:265px" width="20" height="20" viewBox="0 0 20 20"><defs><linearGradient id="cbg" x1="0" y1="0" x2="0" y2="1"><stop offset="0" stop-color="#e6e9f0"/><stop offset="1" stop-color="#b5bac6"/></linearGradient></defs>
<path d="M1.500 5 L5 1 H18.500 L15 5 Z" fill="#f6f7fa"/><path d="M15 5 L18.500 1 V14.500 L15 18.800 Z" fill="#c5c9d3"/><rect x="1.500" y="5" width="13.500" height="13.800" rx="1" fill="url(#cbg)"/>
<path d="M1.500 5 L5 1 H18.500 V14.500 L15 18.800 H2.500 Q1.500 18.800 1.500 17.800 Z" fill="none" stroke="#666" stroke-width="0.900" stroke-linejoin="round"/></svg>
<div class="tn" style="left:154.500px;top:265.500px;color:#fff;font-weight:700">Hump Chair v1</div>
<svg style="left:288px;top:265px" width="21" height="21" viewBox="0 0 21 21"><defs><linearGradient id="rdg" x1="0" y1="0" x2="0" y2="1"><stop offset="0" stop-color="#bdbdbd"/><stop offset="1" stop-color="#ffffff"/></linearGradient></defs>
<circle cx="10.400" cy="10.200" r="9.700" fill="url(#rdg)" stroke="#777" stroke-width="0.900"/><circle cx="10.400" cy="10.200" r="6.500" fill="#e9e9e9"/><circle cx="10.400" cy="10.200" r="3.800" fill="#444"/></svg>
<div class="tb" style="left:87.3px;top:297px;width:200.4px;height:30px"></div>
<svg style="left:60.5px;top:304px" width="12" height="16"><use href="#exp" width="12" height="16"/></svg>
<svg style="left:91px;top:301px" width="22" height="22" viewBox="0 0 22 22"><path d="M9.23 0.85 L12.77 0.85 L12.77 3.61 L14.97 4.52 L16.92 2.57 L19.43 5.08 L17.48 7.03 L18.39 9.23 L21.15 9.23 L21.15 12.77 L18.39 12.77 L17.48 14.97 L19.43 16.92 L16.92 19.43 L14.97 17.48 L12.77 18.39 L12.77 21.15 L9.23 21.15 L9.23 18.39 L7.03 17.48 L5.08 19.43 L2.57 16.92 L4.52 14.97 L3.61 12.77 L0.85 12.77 L0.85 9.23 L3.61 9.23 L4.52 7.03 L2.57 5.08 L5.08 2.57 L7.03 4.52 L9.23 3.61 Z M11.00 7.40 a3.60 3.60 0 1 0 0.010 0 Z" fill="#828282" fill-rule="evenodd"/></svg>
<div class="abs" style="left:118px;top:297px;width:1.200px;height:30px;background:#f8f8f8"></div>
<div class="tn" style="left:131.2px;top:301.5px">Document Settings</div>
<div class="tb" style="left:87.3px;top:333px;width:164.7px;height:30px"></div>
<svg style="left:60.5px;top:340px" width="12" height="16"><use href="#exp" width="12" height="16"/></svg>
<svg style="left:91.3px;top:338.3px" width="24.500" height="19.500"><use href="#folder" width="24.500" height="19.500"/></svg>
<div class="abs" style="left:123.7px;top:333px;width:1.200px;height:30px;background:#f8f8f8"></div>
<div class="tn" style="left:137px;top:337.5px">Named Views</div>
<div class="tb" style="left:87.3px;top:369px;width:148.2px;height:30px"></div>
<svg style="left:60.5px;top:376px" width="12" height="16"><use href="#exp" width="12" height="16"/></svg>
<svg style="left:90.7px;top:376.2px" width="25" height="15.500"><use href="#eyeoff" width="25" height="15.500"/></svg>
<div class="abs" style="left:123.7px;top:369px;width:1.200px;height:30px;background:#f8f8f8"></div>
<svg style="left:129px;top:374.3px" width="24.500" height="19.500"><use href="#folder" width="24.500" height="19.500"/></svg>
<div class="tn" style="left:174.6px;top:373.5px">Origin</div>
<div class="tb" style="left:87.3px;top:405px;width:154.4px;height:30px"></div>
<svg style="left:60.5px;top:412px" width="12" height="16"><use href="#exp" width="12" height="16"/></svg>
<svg style="left:90.7px;top:412.2px" width="25" height="15.500"><use href="#eye" width="25" height="15.500"/></svg>
<div class="abs" style="left:123.7px;top:405px;width:1.200px;height:30px;background:#f8f8f8"></div>
<svg style="left:129px;top:410.3px" width="24.500" height="19.500"><use href="#folder" width="24.500" height="19.500"/></svg>
<div class="tn" style="left:174.6px;top:409.5px">Bodies</div>
<div class="tb" style="left:87.3px;top:441px;width:172.2px;height:30px"></div>
<svg style="left:60.5px;top:450.5px" width="11" height="11"><use href="#expd" width="11" height="11"/></svg>
<svg style="left:90.7px;top:448.2px" width="25" height="15.500"><use href="#eye" width="25" height="15.500"/></svg>
<div class="abs" style="left:123.7px;top:441px;width:1.200px;height:30px;background:#f8f8f8"></div>
<svg style="left:129px;top:446.3px" width="24.500" height="19.500"><use href="#folder" width="24.500" height="19.500"/></svg>
<div class="tn" style="left:174.6px;top:445.5px">Sketches</div>
<div class="tb" style="left:113.9px;top:477px;width:160.2px;height:30px"></div>
<svg style="left:117.9px;top:484.2px" width="25" height="15.500"><use href="#eyeoff" width="25" height="15.500"/></svg>
<div class="abs" style="left:150.7px;top:477px;width:1.200px;height:30px;background:#f8f8f8"></div>
<svg style="left:156.2px;top:479.7px" width="24" height="24"><use href="#skt" width="24" height="24"/></svg>
<div class="tn" style="left:201.8px;top:481.5px">Sketch1</div>
<div class="tb" style="left:113.9px;top:513px;width:160.2px;height:30px"></div>
<svg style="left:117.9px;top:520.2px" width="25" height="15.500"><use href="#eyeoff" width="25" height="15.500"/></svg>
<div class="abs" style="left:150.7px;top:513px;width:1.200px;height:30px;background:#f8f8f8"></div>
<svg style="left:156.2px;top:515.7px" width="24" height="24"><use href="#skt" width="24" height="24"/></svg>
<div class="tn" style="left:201.8px;top:517.5px">Sketch2</div>
<div class="tb" style="left:113.9px;top:549px;width:160.2px;height:30px"></div>
<svg style="left:117.9px;top:556.2px" width="25" height="15.500"><use href="#eyeoff" width="25" height="15.500"/></svg>
<div class="abs" style="left:150.7px;top:549px;width:1.200px;height:30px;background:#f8f8f8"></div>
<svg style="left:156.2px;top:551.7px" width="24" height="24"><use href="#skt" width="24" height="24"/></svg>
<div class="tn" style="left:201.8px;top:553.5px">Sketch3</div>
<div class="tb" style="left:113.9px;top:585px;width:160.2px;height:30px"></div>
<svg style="left:117.9px;top:592.2px" width="25" height="15.500"><use href="#eyeoff" width="25" height="15.500"/></svg>
<div class="abs" style="left:150.7px;top:585px;width:1.200px;height:30px;background:#f8f8f8"></div>
<svg style="left:156.2px;top:588px" width="25" height="25" viewBox="0 0 25 25"><g fill="#555"><rect x="0" y="0" width="2.600" height="2.600"/><rect x="20" y="0" width="2.600" height="2.600"/><rect x="0" y="20" width="2.600" height="2.600"/></g><path d="M4 1.300 H18.500 M1.300 4 V18.500 M21.300 4 V10.500 M4 21.300 H10.500" stroke="#555" stroke-width="1.100" fill="none"/>
<path d="M15.800 17 V15.200 a2.700 2.700 0 0 1 5.400 0 V17" fill="none" stroke="#c9252d" stroke-width="1.400"/><rect x="13.700" y="17" width="9.600" height="7.200" rx="0.600" fill="#e08088" stroke="#c9252d" stroke-width="1.200"/></svg>
<div class="tn" style="left:201.8px;top:589.5px">Sketch9</div>
<div class="tb" style="left:87.3px;top:621px;width:196px;height:30px"></div>
<svg style="left:60.5px;top:628px" width="12" height="16"><use href="#exp" width="12" height="16"/></svg>
<svg style="left:90.7px;top:628.2px" width="25" height="15.500"><use href="#eye" width="25" height="15.500"/></svg>
<div class="abs" style="left:123.7px;top:621px;width:1.200px;height:30px;background:#f8f8f8"></div>
<svg style="left:129px;top:626.3px" width="24.500" height="19.500"><use href="#folder" width="24.500" height="19.500"/></svg>
<div class="tn" style="left:174.6px;top:625.5px">Construction</div>
<div class="abs" style="left:6px;top:1482px;width:449px;height:36px;background:#f2f2f2;border:1px solid #c6c6c6;border-bottom:2px solid #bdbdbd;box-shadow:0 1px 1px rgba(0,0,0,0.08)"></div>
<div class="tn" style="left:43.700px;top:1490px;color:#555">COMMENTS</div>
<svg style="left:423.500px;top:1493px" width="15" height="15" viewBox="0 0 15 15"><circle cx="7.500" cy="7.300" r="7" fill="#1c1c1c"/><path d="M3.500 7.300 H11.500 M7.500 3.300 V11.300" stroke="#f2f2f2" stroke-width="1.600"/></svg>
<svg style="left:0;top:0" width="2560" height="1600" viewBox="0 0 2560 1600">
<defs>
<filter id="bl6" x="-20%" y="-20%" width="140%" height="140%"><feGaussianBlur stdDeviation="3"/></filter>
<filter id="bl2" x="-20%" y="-20%" width="140%" height="140%"><feGaussianBlur stdDeviation="1.2"/></filter>
<linearGradient id="barg" x1="0" y1="0" x2="0" y2="1"><stop offset="0" stop-color="#6f6d66"/><stop offset="0.12" stop-color="#8f8d84"/><stop offset="0.36" stop-color="#cbc9bf"/><stop offset="0.55" stop-color="#9b998f"/><stop offset="0.8" stop-color="#76746d"/><stop offset="1" stop-color="#605f59"/></linearGradient>
<linearGradient id="thin" x1="0" y1="0" x2="0" y2="1"><stop offset="0" stop-color="#6a6862"/><stop offset="0.3" stop-color="#bdbbb0"/><stop offset="0.55" stop-color="#8c8a81"/><stop offset="1" stop-color="#5c5b55"/></linearGradient>
<linearGradient id="sideg" x1="0" y1="0" x2="1" y2="0"><stop offset="0" stop-color="#4a4843"/><stop offset="0.04" stop-color="#55534e"/><stop offset="0.3" stop-color="#62615b"/><stop offset="0.5" stop-color="#6b6b65"/><stop offset="0.75" stop-color="#64625c"/><stop offset="0.95" stop-color="#69665e"/><stop offset="1" stop-color="#5c5a54"/></linearGradient>
<linearGradient id="rimg" x1="0" y1="0" x2="1" y2="0"><stop offset="0" stop-color="#6e6c65"/><stop offset="0.15" stop-color="#8a887f"/><stop offset="0.5" stop-color="#aaa89d"/><stop offset="0.85" stop-color="#8a887f"/><stop offset="1" stop-color="#6e6c65"/></linearGradient>
<linearGradient id="topg" x1="0.8" y1="0" x2="0.2" y2="1"><stop offset="0" stop-color="#625d57"/><stop offset="0.5" stop-color="#65615a"/><stop offset="1" stop-color="#67645a"/></linearGradient>
<radialGradient id="ballg" cx="0.48" cy="0.42" r="0.55"><stop offset="0" stop-color="#877f70"/><stop offset="0.35" stop-color="#78736a"/><stop offset="0.68" stop-color="#7d7b73"/><stop offset="0.86" stop-color="#5b5a54"/><stop offset="1" stop-color="#44433f"/></radialGradient>
<linearGradient id="legL" gradientUnits="userSpaceOnUse" x1="0" y1="0" x2="14" y2="0"><stop offset="0" stop-color="#4f4e49"/><stop offset="0.45" stop-color="#63625c"/><stop offset="1" stop-color="#514f4b"/></linearGradient>
</defs>
<ellipse cx="1280.9" cy="1185" rx="239.7" ry="184" fill="none" stroke="#d2d2d2" stroke-width="5.5" filter="url(#bl2)"/>
<ellipse cx="1280.9" cy="1185.5" rx="220" ry="169.5" fill="#cbcbcb" filter="url(#bl2)"/>
<clipPath id="shclip"><ellipse cx="1280.9" cy="1185.5" rx="220" ry="169.5"/></clipPath>
<g clip-path="url(#shclip)"><path d="M1112 1270 A170 133 0 0 1 1450 1270" fill="none" stroke="#d3d3d3" stroke-width="10" filter="url(#bl6)" opacity="0.55"/></g>
<path d="M1049 1280 A232 200 0 0 0 1512 1280" fill="none" stroke="#d9d9d9" stroke-width="8" filter="url(#bl6)" opacity="0.1"/>
<circle cx="1116.7" cy="1041.5" r="15.7" fill="url(#ballg)"/>
<path d="M1107.28 1045.425 A9.734 6.593999999999999 0 0 0 1126.1200000000001 1045.425" fill="none" stroke="#a3a29a" stroke-width="1.6" opacity="0.55"/>
<path d="M1099.4 800 L1112.8 800 L1122 1032 L1110.6 1032 Z" fill="#514f4b"/>
<path d="M1101.142 800 L1110.522 800 L1120.062 1032 L1112.0819999999999 1032 Z" fill="#5d5c57"/>
<path d="M1103.152 800 L1107.172 800 L1117.212 1032 L1113.792 1032 Z" fill="#63625c"/>
<circle cx="1444.3" cy="1041.5" r="15.7" fill="url(#ballg)"/>
<path d="M1434.8799999999999 1045.425 A9.734 6.593999999999999 0 0 0 1453.72 1045.425" fill="none" stroke="#a3a29a" stroke-width="1.6" opacity="0.55"/>
<path d="M1448.2 800 L1461.6 800 L1450.4 1032 L1439.0 1032 Z" fill="#514f4b"/>
<path d="M1449.942 800 L1459.322 800 L1448.462 1032 L1440.482 1032 Z" fill="#5d5c57"/>
<path d="M1451.952 800 L1455.972 800 L1445.612 1032 L1442.192 1032 Z" fill="#63625c"/>
<defs><linearGradient id="ringhl" x1="0" y1="0" x2="1" y2="0"><stop offset="0" stop-color="#8a887f"/><stop offset="0.25" stop-color="#b5b2a7"/><stop offset="0.5" stop-color="#d2cfc4"/><stop offset="0.75" stop-color="#b5b2a7"/><stop offset="1" stop-color="#8a887f"/></linearGradient><linearGradient id="ringb" x1="0" y1="0" x2="1" y2="0"><stop offset="0" stop-color="#5c5a54"/><stop offset="0.3" stop-color="#696761"/><stop offset="0.5" stop-color="#716f68"/><stop offset="0.7" stop-color="#696761"/><stop offset="1" stop-color="#5c5a54"/></linearGradient></defs>
<path d="M1024.1 1033.9 a256.4 192.3 0 1 0 512.8 0 a256.4 192.3 0 1 0 -512.8 0 Z M1037 1033.1 a243.5 179.9 0 1 1 487 0 a243.5 179.9 0 1 1 -487 0 Z" fill="url(#ringb)" fill-rule="evenodd"/>
<ellipse cx="1280.5" cy="1035.6" rx="249.6" ry="186.2" fill="none" stroke="#8b8981" stroke-width="4"/>
<ellipse cx="1280.5" cy="1031.7" rx="250.2" ry="186.4" fill="none" stroke="url(#ringhl)" stroke-width="2.6"/>
<circle cx="1105.5" cy="1302.3" r="17.2" fill="url(#ballg)"/>
<path d="M1095.18 1306.6 A10.664 7.223999999999999 0 0 0 1115.82 1306.6" fill="none" stroke="#a3a29a" stroke-width="1.6" opacity="0.55"/>
<path d="M1071 863.5 L1085.8 863.5 L1111.4 1292 L1098.8 1292 Z" fill="#514f4b"/>
<path d="M1072.924 863.5 L1083.2839999999999 863.5 L1109.258 1292 L1100.4379999999999 1292 Z" fill="#5d5c57"/>
<path d="M1075.144 863.5 L1079.584 863.5 L1106.108 1292 L1102.328 1292 Z" fill="#63625c"/>
<path d="M1078.4 864 Q1078.2 826 1098 806" fill="none" stroke="#565550" stroke-width="14.8" stroke-linecap="butt" />
<path d="M1078.4 864 Q1078.2 826 1098 806" fill="none" stroke="#6b6a63" stroke-width="10.656" />
<path d="M1078.4 864 Q1078.2 826 1098 806" fill="none" stroke="#7e7c75" stroke-width="5.6240000000000006" />
<path d="M1078.4 864 Q1078.2 826 1098 806" fill="none" stroke="#9c9a90" stroke-width="2.0720000000000005" />
<path d="M1071 863 Q1078.4 867.5 1085.8 863" fill="none" stroke="#1a1a1a" stroke-width="1"/>
<circle cx="1455.5" cy="1302.3" r="17.2" fill="url(#ballg)"/>
<path d="M1445.18 1306.6 A10.664 7.223999999999999 0 0 0 1465.82 1306.6" fill="none" stroke="#a3a29a" stroke-width="1.6" opacity="0.55"/>
<path d="M1475.2 863.5 L1490.0 863.5 L1462.2 1292 L1449.6 1292 Z" fill="#514f4b"/>
<path d="M1477.124 863.5 L1487.484 863.5 L1460.058 1292 L1451.2379999999998 1292 Z" fill="#5d5c57"/>
<path d="M1479.344 863.5 L1483.784 863.5 L1456.908 1292 L1453.128 1292 Z" fill="#63625c"/>
<path d="M1482.6 864 Q1482.8 826 1463.0 806" fill="none" stroke="#565550" stroke-width="14.8" stroke-linecap="butt" />
<path d="M1482.6 864 Q1482.8 826 1463.0 806" fill="none" stroke="#6b6a63" stroke-width="10.656" />
<path d="M1482.6 864 Q1482.8 826 1463.0 806" fill="none" stroke="#7e7c75" stroke-width="5.6240000000000006" />
<path d="M1482.6 864 Q1482.8 826 1463.0 806" fill="none" stroke="#9c9a90" stroke-width="2.0720000000000005" />
<path d="M1490.0 863 Q1482.6 867.5 1475.2 863" fill="none" stroke="#1a1a1a" stroke-width="1"/>
<path d="M1078 419.7 L1092.9 419.7 L1098.8 560 L1085.5 560 Z" fill="#514f4b"/>
<path d="M1079.937 419.7 L1090.3670000000002 419.7 L1096.539 560 L1087.229 560 Z" fill="#5d5c57"/>
<path d="M1082.172 419.7 L1086.642 419.7 L1093.214 560 L1089.224 560 Z" fill="#63625c"/>
<path d="M1085.5 420 A46.4 41 0 0 1 1131.9 379 L1152 379" fill="none" stroke="#5a5953" stroke-width="15" stroke-linecap="butt" />
<path d="M1085.5 420 A46.4 41 0 0 1 1131.9 379 L1152 379" fill="none" stroke="#706e67" stroke-width="10.799999999999999" />
<path d="M1085.5 420 A46.4 41 0 0 1 1131.9 379 L1152 379" fill="none" stroke="#85837b" stroke-width="5.7" />
<path d="M1083.5 416 A44 39 0 0 1 1131.9 376.5 L1152 376.5" fill="none" stroke="#b5b3a8" stroke-width="2.2" opacity="0.85"/>
<path d="M1132.2 371 V387" stroke="#1a1a1a" stroke-width="1"/>
<path d="M1078 419.2 Q1085.5 423 1092.9 419.2" fill="none" stroke="#1a1a1a" stroke-width="1"/>
<path d="M1468.1 419.7 L1483.0 419.7 L1475.5 560 L1462.2 560 Z" fill="#514f4b"/>
<path d="M1470.0369999999998 419.7 L1480.467 419.7 L1473.239 560 L1463.929 560 Z" fill="#5d5c57"/>
<path d="M1472.272 419.7 L1476.742 419.7 L1469.914 560 L1465.924 560 Z" fill="#63625c"/>
<path d="M1475.5 420 A46.4 41 0 0 0 1429.1 379 L1409.0 379" fill="none" stroke="#5a5953" stroke-width="15" stroke-linecap="butt" />
<path d="M1475.5 420 A46.4 41 0 0 0 1429.1 379 L1409.0 379" fill="none" stroke="#706e67" stroke-width="10.799999999999999" />
<path d="M1475.5 420 A46.4 41 0 0 0 1429.1 379 L1409.0 379" fill="none" stroke="#85837b" stroke-width="5.7" />
<path d="M1477.5 416 A44 39 0 0 0 1429.1 376.5 L1409.0 376.5" fill="none" stroke="#b5b3a8" stroke-width="2.2" opacity="0.85"/>
<path d="M1428.8 371 V387" stroke="#1a1a1a" stroke-width="1"/>
<path d="M1483.0 419.2 Q1475.5 423 1468.1 419.2" fill="none" stroke="#1a1a1a" stroke-width="1"/>
<rect x="1151.3" y="367" width="258.4" height="22.8" fill="url(#barg)"/>
<path d="M1151.3 366.5 V390.3 M1409.7 366.5 V390.3" stroke="#1a1a1a" stroke-width="1"/>
<clipPath id="seatclip"><path d="M1016.9 646.0 A263.6 174.0 0 0 1 1544.1 646.0 V661.0 A263.6 174.0 0 0 1 1016.9 661.0 Z"/></clipPath>
<path d="M1016.9 646.0 A263.6 174.0 0 0 1 1544.1 646.0 L1541.7 690.1 A261.2 173.2 0 0 1 1019.3 690.1 Z" fill="#2a2926"/>
<path d="M1016.9 646.0 A263.6 174.0 0 0 1 1544.1 646.0 L1540.5 690 A260 172 0 0 1 1020.5 690 Z" fill="url(#sideg)"/>
<path d="M1016.9 646.0 A263.6 174.0 0 0 1 1544.1 646.0 V661.9 A263.6 174.0 0 0 1 1016.9 661.9 Z" fill="#2a2926" />
<path d="M1016.9 646.0 A263.6 174.0 0 0 1 1544.1 646.0 V660.9 A263.6 174.0 0 0 1 1016.9 660.9 Z" fill="#b9b6ab" />
<path d="M1016.9 646.0 A263.6 174.0 0 0 1 1544.1 646.0 V658.6 A263.6 174.0 0 0 1 1016.9 658.6 Z" fill="#807e77" />
<path d="M1016.9 646.0 A263.6 174.0 0 0 1 1544.1 646.0 V657.4 A263.6 174.0 0 0 1 1016.9 657.4 Z" fill="#d3d0c5" />
<path d="M1016.9 646.0 A263.6 174.0 0 0 1 1544.1 646.0 V655.8 A263.6 174.0 0 0 1 1016.9 655.8 Z" fill="#8d8c85" />
<path d="M1016.9 646.0 A263.6 174.0 0 0 1 1544.1 646.0 V652.5 A263.6 174.0 0 0 1 1016.9 652.5 Z" fill="#7d7b74" />
<path d="M1016.9 646.0 A263.6 174.0 0 0 1 1544.1 646.0 V650.3 A263.6 174.0 0 0 1 1016.9 650.3 Z" fill="#6f6d67" />
<path d="M1016.9 646.0 A263.6 174.0 0 0 1 1544.1 646.0 V649.6 A263.6 174.0 0 0 1 1016.9 649.6 Z" fill="#d3d0c5" />
<path d="M1016.9 646.0 A263.6 174.0 0 0 1 1544.1 646.0 V647.9 A263.6 174.0 0 0 1 1016.9 647.9 Z" fill="#8d8c85" />
<ellipse cx="1280.5" cy="645.40" rx="262.52" ry="173.40" fill="#7d7b74"/>
<ellipse cx="1280.5" cy="644.50" rx="260.90" ry="172.50" fill="#6f6d67"/>
<ellipse cx="1280.5" cy="644.20" rx="260.36" ry="172.20" fill="#d3d0c5"/>
<ellipse cx="1280.5" cy="643.39" rx="258.90" ry="171.39" fill="#8a8880"/>
<defs><linearGradient id="seatshade" x1="0" y1="0" x2="1" y2="0"><stop offset="0" stop-color="#2a2825" stop-opacity="0.4"/><stop offset="0.1" stop-color="#2a2825" stop-opacity="0.2"/><stop offset="0.3" stop-color="#2a2825" stop-opacity="0"/><stop offset="0.55" stop-color="#2a2825" stop-opacity="0"/><stop offset="0.85" stop-color="#2a2825" stop-opacity="0.32"/><stop offset="1" stop-color="#2a2825" stop-opacity="0.48"/></linearGradient></defs>
<rect x="1010" y="460" width="545" height="410" fill="url(#seatshade)" clip-path="url(#seatclip)"/>
<ellipse cx="1280.5" cy="643.0" rx="257.9" ry="170.7" fill="url(#topg)" stroke="#1f1e1c" stroke-width="1.2"/>
</svg>
<div class="abs" style="left:1103px;top:1481px;width:356px;height:36px;background:#f2f2f2"></div>
<svg style="left:1103px;top:1481px" width="356" height="36" viewBox="1103 1481 356 36">
<defs>
<linearGradient id="nvg1" x1="0" y1="0" x2="0" y2="1"><stop offset="0" stop-color="#8d95a8"/><stop offset="1" stop-color="#e4e7ee"/></linearGradient>
<linearGradient id="nvg2" x1="0" y1="0" x2="0" y2="1"><stop offset="0" stop-color="#9ab4e6"/><stop offset="1" stop-color="#7f9fd8"/></linearGradient>
<linearGradient id="nvg3" x1="0" y1="0" x2="0" y2="1"><stop offset="0" stop-color="#fdfdfe"/><stop offset="1" stop-color="#8d95a8"/></linearGradient>
<radialGradient id="lens" cx="0.4" cy="0.35" r="0.7"><stop offset="0" stop-color="#ffffff"/><stop offset="1" stop-color="#d5e6e6"/></radialGradient>
<linearGradient id="nvarr" x1="0" y1="0" x2="1" y2="0"><stop offset="0" stop-color="#ffffff"/><stop offset="1" stop-color="#cfd4df"/></linearGradient>
</defs>
<g fill="#222">
<path d="M1139 1496 H1148 L1143.500 1502.200 Z"/><path d="M1305.200 1496 H1314.200 L1309.700 1502.200 Z"/><path d="M1350.200 1496 H1359.200 L1354.700 1502.200 Z"/><path d="M1397 1496 H1406 L1401.500 1502.200 Z"/><path d="M1443.300 1496 H1452.300 L1447.800 1502.200 Z"/>
</g>
<path d="M1458.400 1493.500 V1508.500" stroke="#111" stroke-width="1.300"/>
<!-- orbit -->
<path d="M1128 1497.500 Q1130 1498.800 1130 1500.200 Q1130 1503.800 1119.100 1504 Q1113 1503.900 1110.500 1502.800" fill="none" stroke="#4a5060" stroke-width="1.100"/>
<path d="M1119.400 1487 L1124 1491.800 H1121.800 V1509.500 H1117.100 V1491.800 H1114.800 Z" fill="url(#nvarr)" stroke="#4a5060" stroke-width="1" stroke-linejoin="round"/>
<path d="M1110.300 1497.500 Q1108.200 1498.800 1108.200 1500.200 Q1108.200 1503 1113 1503.700" fill="none" stroke="#4a5060" stroke-width="1.100"/>
<path d="M1110.300 1497.500 Q1113.500 1496.400 1117 1496.300 M1122 1496.300 Q1125.500 1496.500 1128 1497.500" fill="none" stroke="#4a5060" stroke-width="1.100"/>
<path d="M1117.200 1503.900 Q1119 1504 1121.700 1503.900" fill="none" stroke="#4a5060" stroke-width="1.100"/>
<path d="M1111.300 1502.400 L1115.600 1500 V1504.800 Z" fill="#333a48"/>
<!-- look at -->
<path d="M1160 1494 L1166 1488.800 L1166.500 1491.500 L1175.500 1489.500 V1494 Z" fill="#a7adbb" stroke="#666" stroke-width="0.900"/>
<rect x="1158.300" y="1494" width="20.500" height="14.300" fill="#f6f6f8" stroke="#666" stroke-width="1"/>
<rect x="1161.300" y="1497.200" width="14.500" height="8.200" fill="url(#nvg1)" stroke="#5e6473" stroke-width="0.900"/>
<!-- hand -->
<path d="M1202.500 1509.300 Q1200.500 1504.500 1196.600 1500.500 Q1196.300 1498.500 1198.300 1498.800 Q1200.800 1499.800 1202.200 1502.300 L1201 1491.500 Q1201.200 1489.800 1202.600 1490 Q1203.700 1490.200 1204 1491.600 L1205.300 1497.800 L1205.200 1489 Q1205.500 1487.300 1206.800 1487.400 Q1208 1487.500 1208.300 1489 L1208.700 1497.600 L1209.800 1489.500 Q1210.200 1488 1211.400 1488.200 Q1212.500 1488.500 1212.500 1490 L1212.200 1498.200 L1214.500 1492.600 Q1215.200 1491.400 1216.200 1491.800 Q1217.200 1492.300 1216.800 1493.800 L1214.800 1502.500 Q1214.300 1506.500 1212.800 1509.300 Z" fill="#fff" stroke="#666" stroke-width="1" stroke-linejoin="round"/>
<path d="M1202.500 1509.300 H1212.800" stroke="#aaa" stroke-width="1.200"/>
<!-- zoom -->
<path d="M1250.500 1502.200 L1257.300 1508.800" stroke="#2c3340" stroke-width="3.200" stroke-linecap="round"/>
<circle cx="1244.700" cy="1496" r="8.600" fill="url(#lens)" stroke="#666" stroke-width="1.300"/>
<path d="M1253.800 1491.200 H1258.600 M1256.200 1488.800 V1493.600 M1253.800 1495.600 H1258.600" stroke="#444" stroke-width="0.900"/>
<!-- zoom window -->
<path d="M1288.500 1502.200 L1295.800 1508.800" stroke="#2c3340" stroke-width="3.200" stroke-linecap="round"/>
<circle cx="1282.600" cy="1496" r="8.600" fill="url(#lens)" stroke="#666" stroke-width="1.300"/>
<rect x="1278.300" y="1491.800" width="8.400" height="8.200" fill="#e8e9ee" stroke="#666" stroke-width="0.900"/>
<!-- display -->
<rect x="1324.500" y="1487.700" width="21.500" height="16.500" fill="#f4f4f6" stroke="#666" stroke-width="1"/>
<rect x="1326.800" y="1490" width="17" height="12" fill="url(#nvg2)" stroke="#3b5a9a" stroke-width="0.900"/>
<path d="M1333.500 1504.500 H1337 V1507 H1333.500 Z" fill="#aab0bd"/><ellipse cx="1335.200" cy="1508.300" rx="6" ry="1.300" fill="#b9bec9" stroke="#777" stroke-width="0.600"/>
<!-- grid -->
<rect x="1370.500" y="1488.200" width="21.200" height="21" fill="url(#nvg3)" stroke="#555" stroke-width="1"/>
<path d="M1373.500 1488.200 V1509.200 M1376.500 1488.200 V1509.200 M1379.500 1488.200 V1509.200 M1382.500 1488.200 V1509.200 M1385.500 1488.200 V1509.200 M1388.600 1488.200 V1509.200 M1370.500 1491.200 H1391.700 M1370.500 1494.200 H1391.700 M1370.500 1497.200 H1391.700 M1370.500 1500.200 H1391.700 M1370.500 1503.200 H1391.700 M1370.500 1506.200 H1391.700" stroke="#6b7080" stroke-width="0.700"/>
<!-- viewports -->
<rect x="1417" y="1489.200" width="21.600" height="18.600" rx="1" fill="#4f6fb0"/>
<g fill="#88a6de" stroke="#a9c0ea" stroke-width="0.600"><rect x="1418.300" y="1490.500" width="8.800" height="7.300"/><rect x="1428.500" y="1490.500" width="8.800" height="7.300"/><rect x="1418.300" y="1499.300" width="8.800" height="7.300"/><rect x="1428.500" y="1499.300" width="8.800" height="7.300"/></g>
</svg>

<svg style="left:2440px;top:220px" width="120" height="120" viewBox="2440 220 120 120">
<defs><filter id="vcb" x="-30%" y="-30%" width="160%" height="160%"><feGaussianBlur stdDeviation="4"/></filter>
<linearGradient id="vcf" x1="0" y1="0" x2="0" y2="1"><stop offset="0" stop-color="#efefef"/><stop offset="1" stop-color="#d6d6d6"/></linearGradient></defs>
<path d="M2468 290 H2528 V312 H2468 Z" fill="#9a9a9a" opacity="0.550" filter="url(#vcb)"/>
<path d="M2474.500 240.300 H2520.300 Q2521.300 240.300 2521.400 241.500 L2524.500 273.400 L2521.600 305.500 Q2521.500 306.500 2520.500 306.500 H2474.800 Q2473.800 306.500 2473.600 305.500 L2470 273.400 L2473.300 241.500 Q2473.400 240.300 2474.500 240.300 Z" fill="#f0f0f0"/>
<path d="M2470 273.400 H2524.500 L2521.600 305.500 Q2521.500 306.500 2520.500 306.500 H2474.800 Q2473.800 306.500 2473.600 305.500 Z" fill="url(#vcf)"/>
<rect x="2480.500" y="267" width="34.300" height="12.600" rx="2" fill="#e4e6ec"/>
<path d="M2474.500 240.300 H2520.300 Q2521.300 240.300 2521.400 241.500 L2524.500 273.400 L2521.600 305.500 Q2521.500 306.500 2520.500 306.500 H2474.800 Q2473.800 306.500 2473.600 305.500 L2470 273.400 L2473.300 241.500 Q2473.400 240.300 2474.500 240.300 Z" fill="none" stroke="#909090" stroke-width="0.900"/>
<path d="M2470 273.400 H2524.500" stroke="#808080" stroke-width="1.100"/>
<text x="2497.700" y="259" font-size="9.600" font-weight="700" fill="#8b8f97" text-anchor="middle" font-family="Liberation Sans" letter-spacing="0.900">TOP</text>
<text x="2497.900" y="294.900" font-size="9.600" font-weight="700" fill="#8b8f97" text-anchor="middle" font-family="Liberation Sans" letter-spacing="0.900">FRONT</text>
<path d="M2468.700 268.500 L2470 279 L2474 307.400" fill="none" stroke="#3a3ae8" stroke-width="2"/>
<path d="M2474 307.600 H2528.700" stroke="#e85c5c" stroke-width="2"/>
<text x="2467.300" y="266.500" font-size="13" fill="#8080ff" text-anchor="middle" font-family="Liberation Sans" font-weight="700" transform="translate(2467.300 0) scale(0.800 1) translate(-2467.300 0)">Z</text>
<text x="2535.800" y="312.500" font-size="13" fill="#ff8c8c" text-anchor="middle" font-family="Liberation Sans" font-weight="700" transform="translate(2535.800 0) scale(0.800 1) translate(-2535.800 0)">X</text>
</svg>

<svg width="0" height="0" style="left:0;top:0"><defs>
<symbol id="t_ext" viewBox="0 0 50 50"><path d="M2.700 42.200 H29.300 L38.400 33 V38.500 L29.300 47.700 H2.700 Z" fill="#9c9c9c"/><rect x="2.700" y="42.200" width="26.600" height="5.500" fill="#bababa"/><path d="M2.700 9.900 L11.600 0.700 H38.400 L29.300 9.900 Z" fill="#8ccbfa"/><path d="M29.300 9.900 L38.400 0.700 V31.600 L29.300 40.700 Z" fill="#4894ce"/><rect x="2.700" y="9.900" width="26.600" height="30.800" fill="#69aee4"/><path d="M43.600 5 V39" stroke="#2a2a2a" stroke-width="2.200"/><path d="M43.600 0.500 L48 9 H39.200 Z" fill="#2a2a2a"/></symbol>
<symbol id="t_fil" viewBox="0 0 50 50"><path d="M0.400 12.300 L11.600 1 H26.700 L19.200 12.300 Z" fill="#f4f4f4"/><path d="M0.400 12.300 H19.200 Q36.300 13 36.300 31.600 V47.700 H0.400 Z" fill="#dcdcdc"/><path d="M36.300 32.500 L47.600 22 V37 L36.300 47.700 Z" fill="#b6b6b6"/><path d="M17.500 11.300 L26.700 0.800 Q47 4 47.600 20.900 L37.800 30.300 Q36.500 13 17.500 11.300 Z" fill="#69aee4"/><path d="M25 1 H11.600 L0.400 12.300 V47.700 H36.300 L47.600 37 V22" fill="none" stroke="#5c5c5c" stroke-width="2"/></symbol>
<symbol id="t_cyl" viewBox="0 0 50 50"><path d="M1.600 10.600 V38 A22.400 8.600 0 0 0 46.400 38 V10.600 Z" fill="#69aee4"/><ellipse cx="24" cy="10.600" rx="22.400" ry="8.600" fill="#8ccbfa"/></symbol>
<symbol id="t_sph" viewBox="0 0 50 50"><circle cx="23.900" cy="24.400" r="23.600" fill="#8ccbfa"/><path d="M0.400 26.500 Q23.900 40.500 47.400 26.500 A23.600 23.600 0 0 1 0.400 26.500 Z" fill="#69aee4"/></symbol>
<symbol id="t_mov" viewBox="0 0 50 50"><path d="M23.900 8 V41 M7 24.400 H41" stroke="#333" stroke-width="3.600"/><path d="M23.900 0.800 L31.600 13 H16.200 Z M23.900 48 L31.600 35.800 H16.200 Z M0.400 24.400 L12.500 16.700 V32.100 Z M47.400 24.400 L35.300 16.700 V32.100 Z" fill="#333"/></symbol>
<symbol id="t_mid" viewBox="0 0 50 50"><path d="M1.900 14.100 L15 1 H25.900 L13.900 14.100 Z" fill="#f6f6f6"/><rect x="1.900" y="14.100" width="12" height="32.300" fill="#dcdcdc"/><path d="M13.500 46.400 H1.900 V14.100 L15 1 H25" fill="none" stroke="#5c5c5c" stroke-width="2"/><path d="M15 13.800 L28.600 1.200 V33 L15 46.400 Z" fill="#58c782"/><path d="M33.300 14.400 L46.600 1.200 V33.500 L33.300 46.400 Z" fill="#e8a06a"/></symbol>
<symbol id="t_pipe" viewBox="0 0 50 50"><path d="M6 24 L36 11 Q44 8.500 46 15 Q47.500 22 40 25.500 L12 38.500 Z" fill="#8ccbfa"/><path d="M9 36.500 L41 22 Q46 19 46 15 Q47.500 22 40 26.500 L12 39.500 Z" fill="#69aee4"/><ellipse cx="9.500" cy="31" rx="6.500" ry="8" transform="rotate(-22 9.500 31)" fill="#69aee4"/><ellipse cx="9.500" cy="31" rx="3.600" ry="5" transform="rotate(-22 9.500 31)" fill="#4894ce"/></symbol>
<symbol id="t_copy" viewBox="0 0 50 50"><defs><linearGradient id="tcg" x1="0" y1="0" x2="1" y2="0"><stop offset="0" stop-color="#f4f4f6"/><stop offset="1" stop-color="#b9bcc6"/></linearGradient></defs>
<path d="M3 6 V21 A8.500 3.500 0 0 0 20 21 V6 Z" fill="url(#tcg)" stroke="#777" stroke-width="1.400"/><ellipse cx="11.500" cy="6" rx="8.500" ry="3.500" fill="#fafafa" stroke="#777" stroke-width="1.400"/>
<path d="M25 28 V43 A8.500 3.500 0 0 0 42 43 V28 Z" fill="url(#tcg)" stroke="#777" stroke-width="1.400"/><ellipse cx="33.500" cy="28" rx="8.500" ry="3.500" fill="#fafafa" stroke="#777" stroke-width="1.400"/>
<path d="M8 30 V38 H17" fill="none" stroke="#3b8be0" stroke-width="2.600"/><path d="M15.500 33.500 L21.500 38 L15.500 42.500 Z" fill="#3b8be0"/></symbol>
</defs></svg>
<svg style="left:10px;top:1548px" width="180" height="30" viewBox="10 1548 180 30" fill="#666">
<rect x="16.400" y="1553.200" width="2.800" height="18.600"/><path d="M33.900 1553.200 V1571.800 L20.500 1562.500 Z"/>
<path d="M66.300 1553.600 V1571.400 L53 1562.500 Z"/><rect x="68.600" y="1558.700" width="3.200" height="7.800"/>
<path d="M91.800 1551.300 L109.400 1562.300 L91.800 1573.300 Z"/>
<rect x="127.400" y="1558.700" width="3.200" height="7.800"/><path d="M133 1553.600 V1571.400 L146.500 1562.500 Z"/>
<path d="M167.200 1553.200 V1571.800 L180.500 1562.500 Z"/><rect x="181.200" y="1553.200" width="2.800" height="18.600"/>
</svg>
<div class="abs" style="left:216px;top:1537.200px;width:750px;height:8.800px;background:#e08fe6"></div>
<div class="abs" style="left:231px;top:1585px;width:722.500px;height:3px;background:#c9c9c9"></div>
<div class="abs" style="left:231px;top:1578px;width:3px;height:8px;background:#c9c9c9"></div>
<div class="abs" style="left:267px;top:1578px;width:3px;height:8px;background:#c9c9c9"></div>
<div class="abs" style="left:303px;top:1578px;width:3px;height:8px;background:#c9c9c9"></div>
<div class="abs" style="left:339px;top:1578px;width:3px;height:8px;background:#c9c9c9"></div>
<div class="abs" style="left:375px;top:1578px;width:3px;height:8px;background:#c9c9c9"></div>
<div class="abs" style="left:411px;top:1578px;width:3px;height:8px;background:#c9c9c9"></div>
<div class="abs" style="left:447px;top:1578px;width:3px;height:8px;background:#c9c9c9"></div>
<div class="abs" style="left:483px;top:1578px;width:3px;height:8px;background:#c9c9c9"></div>
<div class="abs" style="left:519px;top:1578px;width:3px;height:8px;background:#c9c9c9"></div>
<div class="abs" style="left:555px;top:1578px;width:3px;height:8px;background:#c9c9c9"></div>
<div class="abs" style="left:591px;top:1578px;width:3px;height:8px;background:#c9c9c9"></div>
<div class="abs" style="left:627px;top:1578px;width:3px;height:8px;background:#c9c9c9"></div>
<div class="abs" style="left:663px;top:1578px;width:3px;height:8px;background:#c9c9c9"></div>
<div class="abs" style="left:699px;top:1578px;width:3px;height:8px;background:#c9c9c9"></div>
<div class="abs" style="left:735px;top:1578px;width:3px;height:8px;background:#c9c9c9"></div>
<div class="abs" style="left:771px;top:1578px;width:3px;height:8px;background:#c9c9c9"></div>
<div class="abs" style="left:807px;top:1578px;width:3px;height:8px;background:#c9c9c9"></div>
<div class="abs" style="left:843px;top:1578px;width:3px;height:8px;background:#c9c9c9"></div>
<div class="abs" style="left:879px;top:1578px;width:3px;height:8px;background:#c9c9c9"></div>
<div class="abs" style="left:915px;top:1578px;width:3px;height:8px;background:#c9c9c9"></div>
<div class="abs" style="left:951px;top:1578px;width:3px;height:8px;background:#c9c9c9"></div>
<svg style="left:219px;top:1549px" width="24" height="24"><use href="#skt" width="24" height="24"/></svg>
<svg style="left:255px;top:1549px" width="24" height="24"><use href="#skt" width="24" height="24"/></svg>
<svg style="left:290.7px;top:1549px" width="24" height="24"><use href="#t_pipe" width="24" height="24"/></svg>
<svg style="left:326.7px;top:1549px" width="24" height="24"><use href="#t_pipe" width="24" height="24"/></svg>
<svg style="left:362.7px;top:1549px" width="24" height="24"><use href="#t_pipe" width="24" height="24"/></svg>
<svg style="left:398.7px;top:1549px" width="24" height="24"><use href="#t_pipe" width="24" height="24"/></svg>
<svg style="left:434.7px;top:1549px" width="24" height="24"><use href="#t_mid" width="24" height="24"/></svg>
<svg style="left:471px;top:1549px" width="24" height="24"><use href="#skt" width="24" height="24"/></svg>
<svg style="left:506.7px;top:1549px" width="24" height="24"><use href="#t_ext" width="24" height="24"/></svg>
<svg style="left:542.7px;top:1549px" width="24" height="24"><use href="#t_fil" width="24" height="24"/></svg>
<svg style="left:578.7px;top:1549px" width="24" height="24"><use href="#t_cyl" width="24" height="24"/></svg>
<svg style="left:614.7px;top:1549px" width="24" height="24"><use href="#t_fil" width="24" height="24"/></svg>
<svg style="left:650.7px;top:1549px" width="24" height="24"><use href="#t_copy" width="24" height="24"/></svg>
<svg style="left:686.7px;top:1549px" width="24" height="24"><use href="#t_mov" width="24" height="24"/></svg>
<svg style="left:722.7px;top:1549px" width="24" height="24"><use href="#t_mov" width="24" height="24"/></svg>
<svg style="left:758.7px;top:1549px" width="24" height="24"><use href="#t_sph" width="24" height="24"/></svg>
<svg style="left:794.7px;top:1549px" width="24" height="24"><use href="#t_sph" width="24" height="24"/></svg>
<svg style="left:830.7px;top:1549px" width="24" height="24"><use href="#t_sph" width="24" height="24"/></svg>
<svg style="left:866.7px;top:1549px" width="24" height="24"><use href="#t_sph" width="24" height="24"/></svg>
<svg style="left:903px;top:1549px" width="24" height="24"><use href="#skt" width="24" height="24"/></svg>
<svg style="left:938.7px;top:1549px" width="24" height="24"><use href="#t_ext" width="24" height="24"/></svg>
<svg style="left:958px;top:1538px" width="24" height="52" viewBox="958 1538 24 52"><path d="M960.300 1539.800 H978 V1545.500 L971 1550.800 V1587.800 H967.800 V1550.800 L960.300 1545.500 Z" fill="#666"/></svg>
<svg style="left:2514px;top:1548px" width="28" height="28" viewBox="2514 1548 28 28"><path d="M2526.39 1550.74 L2530.01 1550.74 L2530.01 1554.10 L2532.65 1555.19 L2535.02 1552.82 L2537.58 1555.38 L2535.21 1557.75 L2536.30 1560.39 L2539.66 1560.39 L2539.66 1564.01 L2536.30 1564.01 L2535.21 1566.65 L2537.58 1569.02 L2535.02 1571.58 L2532.65 1569.21 L2530.01 1570.30 L2530.01 1573.66 L2526.39 1573.66 L2526.39 1570.30 L2523.75 1569.21 L2521.38 1571.58 L2518.82 1569.02 L2521.19 1566.65 L2520.10 1564.01 L2516.74 1564.01 L2516.74 1560.39 L2520.10 1560.39 L2521.19 1557.75 L2518.82 1555.38 L2521.38 1552.82 L2523.75 1555.19 L2526.39 1554.10 Z M2528.20 1558.30 a3.90 3.90 0 1 0 0.010 0 Z" fill="#828282" fill-rule="evenodd"/></svg>
</body></html>
